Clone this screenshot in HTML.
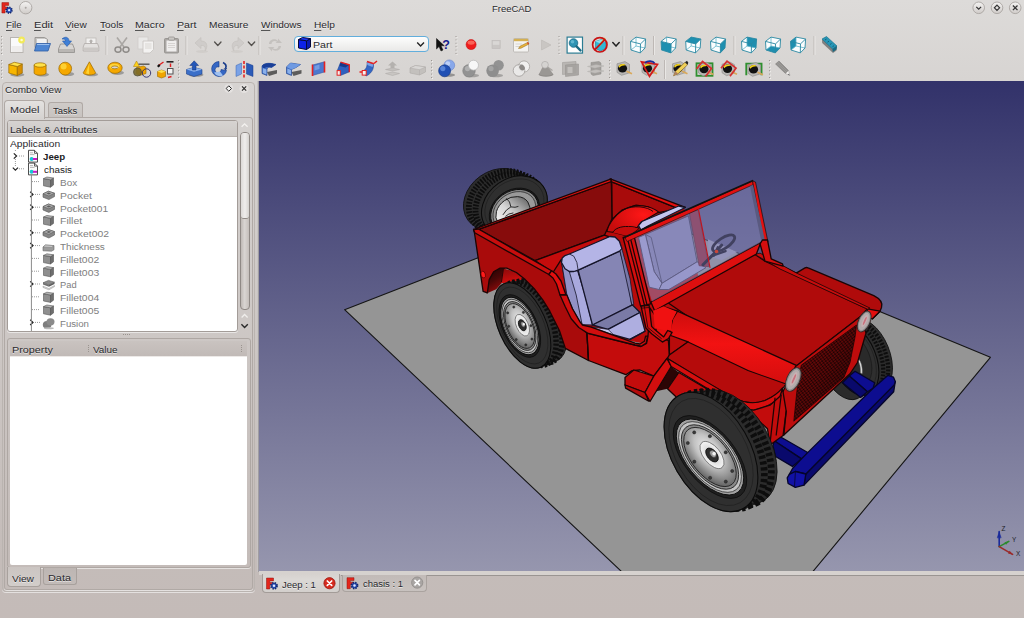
<!DOCTYPE html><html><head><meta charset="utf-8"><title>FreeCAD</title><style>
*{margin:0;padding:0;box-sizing:border-box}
html,body{width:1024px;height:618px;overflow:hidden}
body{font-family:"Liberation Sans",sans-serif;font-size:9.6px;color:#2b2b2b;position:relative;
 background:linear-gradient(#dddbd9 0px,#d7d4d2 80px,#c4bcb9 560px,#c4bbb8 618px);}
.a{position:absolute}
.t{position:absolute;white-space:nowrap;line-height:12px;height:12px;text-shadow:0 1px 0 rgba(255,255,255,.6);color:#2a2a2e}
.m u{text-decoration:none;border-bottom:1px solid #555}
#view{position:absolute;left:259px;top:81px;width:765px;height:490px;background:linear-gradient(#32326a,#9696ae);overflow:hidden}
.fr{position:absolute;border:1px solid #aaa39f;border-radius:3px;box-shadow:inset 0 1px 0 rgba(255,255,255,.0),0 1px 0 rgba(255,255,255,.55)}
.gray{color:#7c7c7c}
.tr{position:absolute;left:0;height:12.8px;width:229px}
</style></head><body>
<div class="t " style="left:491.60px;top:3.04px;font-size:9.7px;transform:scaleX(0.9771);transform-origin:0 0;">FreeCAD</div>
<div class="t m" style="left:5.80px;top:19.04px;font-size:9.7px;transform:scaleX(1.0044);transform-origin:0 0;"><u>F</u>ile</div>
<div class="t m" style="left:33.70px;top:19.04px;font-size:9.7px;transform:scaleX(1.1427);transform-origin:0 0;"><u>E</u>dit</div>
<div class="t m" style="left:65.20px;top:19.04px;font-size:9.7px;transform:scaleX(1.0407);transform-origin:0 0;"><u>V</u>iew</div>
<div class="t m" style="left:99.70px;top:19.04px;font-size:9.7px;transform:scaleX(1.0333);transform-origin:0 0;"><u>T</u>ools</div>
<div class="t m" style="left:135.40px;top:19.04px;font-size:9.7px;transform:scaleX(1.0983);transform-origin:0 0;"><u>M</u>acro</div>
<div class="t m" style="left:177.00px;top:19.04px;font-size:9.7px;transform:scaleX(1.0961);transform-origin:0 0;"><u>P</u>art</div>
<div class="t m" style="left:209.10px;top:19.04px;font-size:9.7px;transform:scaleX(1.0440);transform-origin:0 0;">Measure</div>
<div class="t m" style="left:261.10px;top:19.04px;font-size:9.7px;transform:scaleX(1.0318);transform-origin:0 0;"><u>W</u>indows</div>
<div class="t m" style="left:313.70px;top:19.04px;font-size:9.7px;transform:scaleX(1.0476);transform-origin:0 0;"><u>H</u>elp</div>
<svg class="a" style="left:0;top:0" width="1024" height="81" viewBox="0 0 1024 81"><g transform="translate(1.5,2.2) scale(0.8)"><path d="M0.5,0.5 H9 V4 H4.5 V6 H8 V9 H4.5 V13.5 H0.5Z" fill="#e4261c" stroke="#8c120c" stroke-width=".6"/><circle cx="9.5" cy="10" r="3.6" fill="#2a4fb4" stroke="#14286c" stroke-width="2" stroke-dasharray="1.5 1.3"/><circle cx="9.5" cy="10" r="1.4" fill="#dfe7ff"/></g><defs><linearGradient id="btn" x1="0" y1="0" x2="0" y2="1"><stop offset="0" stop-color="#f4f3f2"/><stop offset="1" stop-color="#cfcbc8"/></linearGradient></defs><circle cx="25.7" cy="7.7" r="6.2" fill="url(#btn)" stroke="#a9a5a2" stroke-width=".9"/><circle cx="25.7" cy="7.7" r="1" fill="#a9a5a2"/><circle cx="978.7" cy="7.8" r="5.8" fill="url(#btn)" stroke="#a9a5a2" stroke-width=".9"/><polyline points="976.3,6.8 978.7,9.2 981.1,6.8" fill="none" stroke="#333" stroke-width="1.2"/><circle cx="997.0" cy="7.8" r="5.8" fill="url(#btn)" stroke="#a9a5a2" stroke-width=".9"/><polygon points="997,5.2 999.6,7.8 997,10.4 994.4,7.8" fill="none" stroke="#333" stroke-width="1.2"/><circle cx="1015.2" cy="7.8" r="5.8" fill="url(#btn)" stroke="#a9a5a2" stroke-width=".9"/><path d="M1012.9,5.5 L1017.5,10.1 M1017.5,5.5 L1012.9,10.1" stroke="#333" stroke-width="1.3"/><line x1="1.5" y1="36.0" x2="1.5" y2="55.0" stroke="#9b9692" stroke-width="1" stroke-dasharray="1 2.4"/>
<line x1="2.5" y1="37.0" x2="2.5" y2="56.0" stroke="#f2f0ee" stroke-width="1" stroke-dasharray="1 2.4"/>
<line x1="1.5" y1="60.0" x2="1.5" y2="79.0" stroke="#9b9692" stroke-width="1" stroke-dasharray="1 2.4"/>
<line x1="2.5" y1="61.0" x2="2.5" y2="80.0" stroke="#f2f0ee" stroke-width="1" stroke-dasharray="1 2.4"/>
<g transform="translate(10.00,37.00)" ><rect x="0.5" y="0.5" width="12.5" height="15" fill="#fafafa" stroke="#b9b5b1" stroke-width="1"/><rect x="1.5" y="9" width="10.5" height="6" fill="#e9e7e5" opacity=".7"/><circle cx="11.6" cy="3" r="3.4" fill="#f2ea5a"/><circle cx="11.6" cy="3" r="1.3" fill="#fffbd0"/></g>
<g transform="translate(33.50,36.50)" ><path d="M1.5,1 H11 L14,3 V11 H1.5Z" fill="#c9c7c5" stroke="#8d8a88" stroke-width=".8"/><path d="M3.5,2.5 H13 V10 H3.5Z" fill="#f2f2f2"/><path d="M3,7 H17 L14.5,14.5 H1 Z" fill="#4e86d2" stroke="#2e5da5" stroke-width=".8"/><path d="M3.6,8 H15.8" stroke="#9cc0ee" stroke-width="1"/></g>
<g transform="translate(58.00,37.00)" ><path d="M2.5,7 H14.5 L16.5,12 V15.5 H0.5 V12Z" fill="#d7d5d3" stroke="#8d8a88" stroke-width=".8"/><rect x="1" y="12" width="15" height="3" fill="#b9b6b3"/><path d="M4,2 C7,-1 11,0 11,4 H13.5 L9,9.5 L4.5,4 H7.5 C7.5,2.4 6,1.6 4,2Z" fill="#3f7fd6" stroke="#2559a8" stroke-width=".6"/></g>
<g transform="translate(83.00,37.00)" ><rect x="3" y="1" width="10" height="7" fill="#f1f0ef" stroke="#bdbab7" stroke-width=".8"/><path d="M8,2.2 L10.4,4.6 H9 V6.5 H7 V4.6 H5.6Z" fill="#b5b2af"/><path d="M1.5,6.5 H14.5 L15.8,10 V14 H0.2 V10Z" fill="#e3e1df" stroke="#aeaaa7" stroke-width=".8"/><rect x="0.6" y="10.5" width="14.8" height="3" fill="#cbc8c5"/></g>
<line x1="106.0" y1="36.0" x2="106.0" y2="55.0" stroke="#bdb8b5" stroke-width="1"/>
<line x1="107.0" y1="36.0" x2="107.0" y2="55.0" stroke="#e9e7e5" stroke-width="1"/>
<g transform="translate(114.00,37.00)" ><path d="M3,0.5 L10,10 M13,0.5 L6,10" stroke="#a9a6a3" stroke-width="1.6" fill="none"/><ellipse cx="4" cy="12.6" rx="3" ry="2.6" fill="none" stroke="#8f8c89" stroke-width="1.5"/><ellipse cx="12" cy="12.6" rx="3" ry="2.6" fill="none" stroke="#8f8c89" stroke-width="1.5"/></g>
<g transform="translate(137.50,36.50)" ><rect x="0.5" y="0.5" width="10" height="12" fill="#e9e8e7" stroke="#cfccca" stroke-width=".8"/><path d="M5.5,4.5 H16 V13 L12.5,16.5 H5.5Z" fill="#f3f2f1" stroke="#c5c2bf" stroke-width=".8"/><path d="M7.5,7.5 H14 M7.5,9.5 H14 M7.5,11.5 H14" stroke="#d2cfcc" stroke-width=".8"/></g>
<g transform="translate(164.00,36.50)" ><rect x="0.5" y="2" width="14" height="14.5" rx="1" fill="#aaa7a4" stroke="#8e8b88" stroke-width=".8"/><rect x="2.5" y="4" width="10" height="11" fill="#efeeed"/><rect x="4.5" y="0.5" width="6" height="3.2" rx="1" fill="#c9c6c3" stroke="#8e8b88" stroke-width=".7"/><path d="M4,7 H11 M4,9 H11 M4,11 H11" stroke="#cfccc9" stroke-width=".8"/></g>
<line x1="186.0" y1="36.0" x2="186.0" y2="55.0" stroke="#bdb8b5" stroke-width="1"/>
<line x1="187.0" y1="36.0" x2="187.0" y2="55.0" stroke="#e9e7e5" stroke-width="1"/>
<g transform="translate(194.00,37.00)" ><path d="M1,6 L7,0.5 V4 C13,4 14.5,9 11,14 C12,10 10.5,8.2 7,8.4 V11.5Z" fill="#cfccca" stroke="#c2bfbc" stroke-width=".6"/><ellipse cx="8" cy="14.5" rx="6" ry="1.5" fill="#c9c6c3" opacity=".6"/></g>
<polyline points="214.6,42.0 217.8,45.5 221.0,42.0" fill="none" stroke="#55524f" stroke-width="1.3" stroke-linecap="round" stroke-linejoin="round"/>
<g transform="translate(229.00,37.00)" ><path d="M15,6 L9,0.5 V4 C3,4 1.5,9 5,14 C4,10 5.5,8.2 9,8.4 V11.5Z" fill="#cfccca" stroke="#c2bfbc" stroke-width=".6"/><ellipse cx="8" cy="14.5" rx="6" ry="1.5" fill="#c9c6c3" opacity=".6"/></g>
<polyline points="248.3,42.0 251.5,45.5 254.7,42.0" fill="none" stroke="#55524f" stroke-width="1.3" stroke-linecap="round" stroke-linejoin="round"/>
<line x1="259.0" y1="36.0" x2="259.0" y2="55.0" stroke="#bdb8b5" stroke-width="1"/>
<line x1="260.0" y1="36.0" x2="260.0" y2="55.0" stroke="#e9e7e5" stroke-width="1"/>
<g transform="translate(267.00,37.00)" ><path d="M2,7 C2,2 9,1 11,4 V1.5 L15,6 H8.5 L10,4.8 C8,3 4.5,4 4.5,7Z" fill="#c4c1be"/><path d="M14,9 C14,14 7,15 5,12 V14.5 L1,10 H7.5 L6,11.2 C8,13 11.5,12 11.5,9Z" fill="#c4c1be"/></g>
<g transform="translate(436.00,38.00)" ><path d="M0.5,0.5 V11 L3,8.6 L5,13 L7,12 L5,7.8 H8.3Z" fill="#111" stroke="#111" stroke-width=".5" stroke-linejoin="round"/></g>
<text x="442.3" y="48.6" font-family="Liberation Sans,sans-serif" font-weight="bold" font-size="12.5" fill="#141c8c">?</text>
<line x1="456.0" y1="36.0" x2="456.0" y2="55.0" stroke="#9b9692" stroke-width="1" stroke-dasharray="1 2.4"/>
<line x1="457.0" y1="37.0" x2="457.0" y2="56.0" stroke="#f2f0ee" stroke-width="1" stroke-dasharray="1 2.4"/>
<circle cx="471.1" cy="44.6" r="5" fill="#ee1c1c"/><ellipse cx="471.1" cy="42.6" rx="3.6" ry="2.2" fill="#ff7b6b" opacity=".75"/><circle cx="471.1" cy="44.6" r="5" fill="none" stroke="#c41010" stroke-width=".6"/>
<rect x="492" y="40.5" width="8.2" height="8" fill="#c9c6c4" stroke="#bdbab8" stroke-width=".6"/><rect x="492.8" y="41.2" width="6.6" height="3.6" fill="#d9d7d5"/>
<g transform="translate(513.00,37.00)" ><rect x="0.5" y="1.5" width="15" height="13.5" rx="1" fill="#f4f3f1" stroke="#b5b1ad" stroke-width=".8"/><rect x="0.9" y="1.8" width="14.2" height="2.4" fill="#d4b052"/><path d="M2.5,7 H9 M2.5,9.5 H7" stroke="#cfcbc7" stroke-width=".8"/><path d="M5.5,11.5 L7,9.2 L15,5.2 L16,7 L8,11.2Z" fill="#e8b23a" stroke="#8f6a1c" stroke-width=".5"/><path d="M14,5.7 L15,5.2 L16,7 L15,7.5Z" fill="#d83a2a"/></g>
<g transform="translate(541.00,39.50)" ><path d="M0.5,0.5 L10,5.5 L0.5,10.5Z" fill="#c9c6c3" stroke="#bcb9b6" stroke-width=".6"/></g>
<line x1="559.0" y1="36.0" x2="559.0" y2="55.0" stroke="#9b9692" stroke-width="1" stroke-dasharray="1 2.4"/>
<line x1="560.0" y1="37.0" x2="560.0" y2="56.0" stroke="#f2f0ee" stroke-width="1" stroke-dasharray="1 2.4"/>
<g transform="translate(566.50,36.50)" ><rect x="0.6" y="0.6" width="15.4" height="16" fill="#fdfdfd" stroke="#2b7d93" stroke-width="1.2"/><circle cx="7" cy="6.5" r="4.3" fill="#2e93b3" stroke="#1b6a84" stroke-width=".8"/><circle cx="6" cy="5.3" r="1.8" fill="#6ec0d8" opacity=".8"/><path d="M10,9.8 L14,14" stroke="#1b6a84" stroke-width="2.4" stroke-linecap="round"/></g>
<g transform="translate(591.50,36.50)" ><polygon points="4,5 10,3 14,5 14,12 9,14.5 4,12" fill="#31b8d6" stroke="#1a7f98" stroke-width=".6"/><polygon points="4,5 10,3 14,5 9,7" fill="#8be0f0"/><path d="M8,9 L13.5,1.5" stroke="#e9c23a" stroke-width="1.6"/><circle cx="8.3" cy="8.3" r="7.2" fill="none" stroke="#c81414" stroke-width="1.7"/><path d="M3.2,13.4 L13.4,3.2" stroke="#c81414" stroke-width="1.7"/></g>
<polyline points="612.8,42.6 616.0,46.1 619.2,42.6" fill="none" stroke="#222" stroke-width="1.5" stroke-linecap="round" stroke-linejoin="round"/>
<line x1="623.0" y1="36.0" x2="623.0" y2="55.0" stroke="#bdb8b5" stroke-width="1"/>
<line x1="624.0" y1="36.0" x2="624.0" y2="55.0" stroke="#e9e7e5" stroke-width="1"/>
<line x1="653.5" y1="36.0" x2="653.5" y2="55.0" stroke="#bdb8b5" stroke-width="1"/>
<line x1="654.5" y1="36.0" x2="654.5" y2="55.0" stroke="#e9e7e5" stroke-width="1"/>
<g transform="translate(630.00,36.40)" ><polygon points="0.5,5.0 6.0,0.7 15.6,2.6 15.0,11.6 10.3,16.5 1.0,13.6" fill="#fbfdfe" stroke="none"/><g stroke="#5fb3c8" stroke-width="0.8" fill="none"><polyline points="6.0,0.7 6.0,9.6 1.0,13.6"/><polyline points="6.0,9.6 15.0,11.6"/><polyline points="6.0,9.6 6.0,9.6"/></g><g stroke="#2a88a2" stroke-width="0.9" fill="none" stroke-linejoin="round"><polygon points="0.5,5.0 6.0,0.7 15.6,2.6 15.0,11.6 10.3,16.5 1.0,13.6"/><polyline points="0.5,5.0 10.5,7.5 10.3,16.5"/><polyline points="10.5,7.5 15.6,2.6"/><polyline points="10.5,7.5 10.5,7.5"/></g></g>
<g transform="translate(660.60,36.40)" ><polygon points="0.5,5.0 6.0,0.7 15.6,2.6 15.0,11.6 10.3,16.5 1.0,13.6" fill="#fbfdfe" stroke="none"/><g stroke="#5fb3c8" stroke-width="0.8" fill="none"><polyline points="6.0,0.7 6.0,9.6 1.0,13.6"/><polyline points="6.0,9.6 15.0,11.6"/><polyline points="6.0,9.6 6.0,9.6"/></g><polygon points="0.5,5.0 10.5,7.5 10.3,16.5 1.0,13.6" fill="#1e8fb0"/><g stroke="#2a88a2" stroke-width="0.9" fill="none" stroke-linejoin="round"><polygon points="0.5,5.0 6.0,0.7 15.6,2.6 15.0,11.6 10.3,16.5 1.0,13.6"/><polyline points="0.5,5.0 10.5,7.5 10.3,16.5"/><polyline points="10.5,7.5 15.6,2.6"/><polyline points="10.5,7.5 10.5,7.5"/></g></g>
<g transform="translate(685.20,36.40)" ><polygon points="0.5,5.0 6.0,0.7 15.6,2.6 15.0,11.6 10.3,16.5 1.0,13.6" fill="#fbfdfe" stroke="none"/><g stroke="#5fb3c8" stroke-width="0.8" fill="none"><polyline points="6.0,0.7 6.0,9.6 1.0,13.6"/><polyline points="6.0,9.6 15.0,11.6"/><polyline points="6.0,9.6 6.0,9.6"/></g><polygon points="0.5,5.0 6.0,0.7 15.6,2.6 10.5,7.5" fill="#1e8fb0"/><g stroke="#2a88a2" stroke-width="0.9" fill="none" stroke-linejoin="round"><polygon points="0.5,5.0 6.0,0.7 15.6,2.6 15.0,11.6 10.3,16.5 1.0,13.6"/><polyline points="0.5,5.0 10.5,7.5 10.3,16.5"/><polyline points="10.5,7.5 15.6,2.6"/><polyline points="10.5,7.5 10.5,7.5"/></g></g>
<g transform="translate(710.00,36.40)" ><polygon points="0.5,5.0 6.0,0.7 15.6,2.6 15.0,11.6 10.3,16.5 1.0,13.6" fill="#fbfdfe" stroke="none"/><g stroke="#5fb3c8" stroke-width="0.8" fill="none"><polyline points="6.0,0.7 6.0,9.6 1.0,13.6"/><polyline points="6.0,9.6 15.0,11.6"/><polyline points="6.0,9.6 6.0,9.6"/></g><polygon points="10.5,7.5 15.6,2.6 15.0,11.6 10.3,16.5" fill="#1e8fb0"/><g stroke="#2a88a2" stroke-width="0.9" fill="none" stroke-linejoin="round"><polygon points="0.5,5.0 6.0,0.7 15.6,2.6 15.0,11.6 10.3,16.5 1.0,13.6"/><polyline points="0.5,5.0 10.5,7.5 10.3,16.5"/><polyline points="10.5,7.5 15.6,2.6"/><polyline points="10.5,7.5 10.5,7.5"/></g></g>
<line x1="734.0" y1="36.0" x2="734.0" y2="55.0" stroke="#bdb8b5" stroke-width="1"/>
<line x1="735.0" y1="36.0" x2="735.0" y2="55.0" stroke="#e9e7e5" stroke-width="1"/>
<g transform="translate(741.00,36.40)" ><polygon points="0.5,5.0 6.0,0.7 15.6,2.6 15.0,11.6 10.3,16.5 1.0,13.6" fill="#fbfdfe" stroke="none"/><polygon points="6.0,0.7 15.6,2.6 15.0,11.6 6.0,9.6" fill="#1e8fb0"/><g stroke="#5fb3c8" stroke-width="0.8" fill="none"><polyline points="6.0,0.7 6.0,9.6 1.0,13.6"/><polyline points="6.0,9.6 15.0,11.6"/><polyline points="6.0,9.6 6.0,9.6"/></g><g stroke="#2a88a2" stroke-width="0.9" fill="none" stroke-linejoin="round"><polygon points="0.5,5.0 6.0,0.7 15.6,2.6 15.0,11.6 10.3,16.5 1.0,13.6"/><polyline points="0.5,5.0 10.5,7.5 10.3,16.5"/><polyline points="10.5,7.5 15.6,2.6"/><polyline points="10.5,7.5 10.5,7.5"/></g></g>
<g transform="translate(765.00,36.40)" ><polygon points="0.5,5.0 6.0,0.7 15.6,2.6 15.0,11.6 10.3,16.5 1.0,13.6" fill="#fbfdfe" stroke="none"/><polygon points="1.0,13.6 10.3,16.5 15.0,11.6 6.0,9.6" fill="#1e8fb0"/><g stroke="#5fb3c8" stroke-width="0.8" fill="none"><polyline points="6.0,0.7 6.0,9.6 1.0,13.6"/><polyline points="6.0,9.6 15.0,11.6"/><polyline points="6.0,9.6 6.0,9.6"/></g><g stroke="#2a88a2" stroke-width="0.9" fill="none" stroke-linejoin="round"><polygon points="0.5,5.0 6.0,0.7 15.6,2.6 15.0,11.6 10.3,16.5 1.0,13.6"/><polyline points="0.5,5.0 10.5,7.5 10.3,16.5"/><polyline points="10.5,7.5 15.6,2.6"/><polyline points="10.5,7.5 10.5,7.5"/></g></g>
<g transform="translate(790.00,36.40)" ><polygon points="0.5,5.0 6.0,0.7 15.6,2.6 15.0,11.6 10.3,16.5 1.0,13.6" fill="#fbfdfe" stroke="none"/><polygon points="0.5,5.0 6.0,0.7 6.0,9.6 1.0,13.6" fill="#1e8fb0"/><g stroke="#5fb3c8" stroke-width="0.8" fill="none"><polyline points="6.0,0.7 6.0,9.6 1.0,13.6"/><polyline points="6.0,9.6 15.0,11.6"/><polyline points="6.0,9.6 6.0,9.6"/></g><g stroke="#2a88a2" stroke-width="0.9" fill="none" stroke-linejoin="round"><polygon points="0.5,5.0 6.0,0.7 15.6,2.6 15.0,11.6 10.3,16.5 1.0,13.6"/><polyline points="0.5,5.0 10.5,7.5 10.3,16.5"/><polyline points="10.5,7.5 15.6,2.6"/><polyline points="10.5,7.5 10.5,7.5"/></g></g>
<line x1="814.0" y1="36.0" x2="814.0" y2="55.0" stroke="#bdb8b5" stroke-width="1"/>
<line x1="815.0" y1="36.0" x2="815.0" y2="55.0" stroke="#e9e7e5" stroke-width="1"/>
<g transform="translate(821.00,36.50)" ><polygon points="1,3.5 5,0.5 16,10.5 15.5,14 12,16.5 1.2,6.5" fill="#3a3a3a" opacity=".55"/><polygon points="1,2.5 5.5,0 16,9.5 11.5,12.5" fill="#2796b6" stroke="#176e88" stroke-width=".6"/><polygon points="11.5,12.5 16,9.5 15.5,13 11.8,15.5" fill="#156a84"/><path d="M4,3.5 L5.5,2.5 M6.5,5.7 L8,4.7 M9,8 L10.5,7 M11.5,10.2 L13,9.2" stroke="#0b3e50" stroke-width=".6"/></g>
<g transform="translate(8.30,61.50)" ><ellipse cx="9" cy="13.2" rx="7" ry="2" fill="#6b6b6b" opacity=".55"/><polygon points="0.5,3 9,5 9,14 0.5,11.5" fill="#f7b500" stroke="#9a6a00" stroke-width=".7"/><polygon points="9,5 14,2.5 14,11.5 9,14" fill="#d98f00" stroke="#9a6a00" stroke-width=".7"/><polygon points="0.5,3 6,0.8 14,2.5 9,5" fill="#ffe14a" stroke="#9a6a00" stroke-width=".7"/></g>
<g transform="translate(33.60,62.00)" ><ellipse cx="9" cy="12.6" rx="6.5" ry="2" fill="#6b6b6b" opacity=".55"/><path d="M0.5,3 V11 A6,2.2 0 0 0 12.5,11 V3 Z" fill="#f5a800" stroke="#9a6a00" stroke-width=".7"/><ellipse cx="6.5" cy="3" rx="6" ry="2.2" fill="#ffe14a" stroke="#9a6a00" stroke-width=".7"/></g>
<g transform="translate(58.20,61.60)" ><ellipse cx="10" cy="12.4" rx="6" ry="2" fill="#6b6b6b" opacity=".55"/><circle cx="7" cy="7" r="6.4" fill="#f5a800" stroke="#9a6a00" stroke-width=".7"/><circle cx="5.4" cy="5" r="3" fill="#ffd940" opacity=".8"/></g>
<g transform="translate(83.00,61.80)" ><ellipse cx="9" cy="12.6" rx="6" ry="1.8" fill="#6b6b6b" opacity=".55"/><path d="M6.4,0 L12.6,11 A6.2,2.2 0 0 1 0.2,11 Z" fill="#f5a800" stroke="#9a6a00" stroke-width=".7"/><path d="M6.4,0.8 L3,11.5 L6,12.5 Z" fill="#ffdc40" opacity=".8"/></g>
<g transform="translate(107.50,61.80)" ><ellipse cx="10" cy="11" rx="6.5" ry="2.2" fill="#6b6b6b" opacity=".55"/><ellipse cx="7.5" cy="6" rx="7.2" ry="5.6" fill="#f5a800" stroke="#9a6a00" stroke-width=".7"/><ellipse cx="7" cy="4.6" rx="5" ry="2.6" fill="#ffe14a" opacity=".8"/><ellipse cx="7.3" cy="5.6" rx="3.4" ry="1.4" fill="#d9d5d0" stroke="#9a6a00" stroke-width=".7"/></g>
<g transform="translate(132.50,60.50)" ><polygon points="4,0.5 7,6 1,6" fill="#ffd21a" stroke="#a97a00" stroke-width=".5"/><rect x="6" y="3" width="11" height="1.4" fill="#555"/><polygon points="4,7 11,5.5 13.5,7 13.5,13 7,15 4,13" fill="#f0a400" stroke="#9a6a00" stroke-width=".6"/><circle cx="5" cy="11.5" r="4" fill="#7a6a2a" stroke="#4a4a3a" stroke-width=".8" opacity=".9"/><circle cx="14" cy="12.5" r="4.2" fill="none" stroke="#2a2a6a" stroke-width=".9"/></g>
<g transform="translate(156.50,60.50)" ><rect x="10" y="0.5" width="7" height="1.6" fill="#222"/><rect x="11" y="8" width="5.5" height="5.5" fill="#f4f4f4" stroke="#555" stroke-width="1"/><polygon points="1,11 5,9.5 9,11 9,16 5,17.5 1,16" fill="#f0a400" stroke="#9a6a00" stroke-width=".6"/><polygon points="1,11 5,9.5 9,11 5,12.5" fill="#ffe14a"/><path d="M2,5 L7,1.5 M14,3 V6.5 M15,16 L11.5,17" stroke="#e02020" stroke-width="1.4"/><path d="M0.5,5.5 L2.5,3.5 L4,5.2 L2,7Z" fill="#111"/></g>
<line x1="178.5" y1="60.0" x2="178.5" y2="79.0" stroke="#9b9692" stroke-width="1" stroke-dasharray="1 2.4"/>
<line x1="179.5" y1="61.0" x2="179.5" y2="80.0" stroke="#f2f0ee" stroke-width="1" stroke-dasharray="1 2.4"/>
<g transform="translate(186.00,60.50)" ><ellipse cx="10" cy="14.3" rx="7.5" ry="2" fill="#555" opacity=".5"/><polygon points="0.5,9 8,7 16,9 16,13.5 8,16 0.5,13.5" fill="#3b6fc8" stroke="#1d3f8a" stroke-width=".6"/><polygon points="0.5,9 8,7 16,9 8,11.2" fill="#8eb4ee"/><path d="M8.2,0.3 L12.6,5 H10 V9.5 H6.4 V5 H3.8Z" fill="#2457b8" stroke="#12307a" stroke-width=".5"/></g>
<g transform="translate(211.00,60.50)" ><path d="M8,1 A7.5,7.5 0 1 0 15.5,10 L10,9 A3,3 0 1 1 8,6.5Z" fill="#3567c4" stroke="#163a8a" stroke-width=".6"/><path d="M3,12 A7,7 0 0 0 12,15 L9,11Z" fill="#9fc0f0"/><path d="M12,2 C15,3.5 15.5,6 14.5,8" fill="none" stroke="#163a8a" stroke-width="1.6"/><path d="M12.6,8 L14.6,10 L16.2,7.4Z" fill="#163a8a"/></g>
<g transform="translate(235.50,60.50)" ><polygon points="0.5,5 6,2.5 6,13.5 0.5,16" fill="#7aa2e6" stroke="#3a62b0" stroke-width=".5"/><polygon points="17.5,5 11,2.5 11,13.5 17.5,16" fill="#2b5bb8" stroke="#163a8a" stroke-width=".5"/><path d="M8.5,0.5 V17.5" stroke="#e62020" stroke-width="1.6" stroke-dasharray="3 1.5"/></g>
<g transform="translate(261.00,61.00)" ><polygon points="6,11 16,9 16,12.5 8,15" fill="#333" opacity=".75"/><path d="M1,5 C3,2 8,1.5 15,3.5 L10.5,6.5 C8,6 6.5,6.5 6,8 L6,14.5 L1,12.5Z" fill="#3d6dc6" stroke="#183c8c" stroke-width=".6"/><path d="M1,5 C3,2 8,1.5 15,3.5 L10.5,6.5 C7,5.5 4,6 3,8Z" fill="#1a3f98"/><path d="M1.8,7 L5.5,8.6 V13.5 L1.8,12Z" fill="#9ec0f2" opacity=".8"/></g>
<g transform="translate(285.50,61.00)" ><polygon points="6,11 16,9 16,12.5 8,15" fill="#333" opacity=".75"/><path d="M1,6 L5,2 L15,3.5 L10.5,6.5 L6,8.5 L6,14.5 L1,12.5Z" fill="#3d6dc6" stroke="#183c8c" stroke-width=".6"/><path d="M1,6 L5,2 L15,3.5 L10.5,6.5 L6,8.5Z" fill="#6f9ae2"/><path d="M1.8,7.4 L5.5,9 V13.5 L1.8,12Z" fill="#9ec0f2" opacity=".8"/></g>
<g transform="translate(311.50,61.00)" ><polygon points="1,4 13,0.8 13,11 1,14.5" fill="#4b78cf" stroke="#2a4fa0" stroke-width=".5"/><polygon points="3,5 8,3.6 8,8 3,9.4" fill="#8fb2ee" opacity=".6"/><path d="M1,3.5 V15 M13,0.5 V11.5" stroke="#e62020" stroke-width="1.6"/></g>
<g transform="translate(336.50,61.00)" ><polygon points="4,1.5 12.5,4 12.5,11 4,14.5 1,12 1,9" fill="#2f60bf" stroke="#173a8c" stroke-width=".5"/><polygon points="4,1.5 12.5,4 9,6.5 3,5" fill="#173a8c"/><path d="M4,1.2 L12.8,3.8 V11.2" stroke="#e62020" stroke-width="1.3" fill="none"/><rect x="0.6" y="9.6" width="3.2" height="4.6" fill="#f3f3f3" stroke="#e62020" stroke-width="1"/></g>
<g transform="translate(359.00,60.50)" ><path d="M8,1.5 L14.5,3.5 C15,9 12,13.5 7,15.5 L3.5,11 C7,9 8.5,6 8,1.5Z" fill="#3567c4" stroke="#173a8c" stroke-width=".5"/><path d="M8,1.5 L14.5,3.5 L13.5,6.5 L8.3,4.5Z" fill="#7aa2e6"/><path d="M8,1 L14.8,3.2 M15,3 L18,0.5 M0.5,11.5 H4.5" stroke="#e62020" stroke-width="1.5"/><rect x="3.2" y="10" width="4" height="4.6" fill="#f3f3f3" stroke="#e62020" stroke-width="1"/></g>
<g transform="translate(385.00,61.00)" ><path d="M7.5,0.5 L12,4.5 H9.5 V7 H5.5 V4.5 H3Z" fill="#b4b1ae"/><polygon points="0.5,8.5 7.5,7 14.5,8.5 7.5,10" fill="#c2bfbc" stroke="#aaa7a4" stroke-width=".5"/><polygon points="0.5,12.5 7.5,11 14.5,12.5 7.5,14.5" fill="#c8c5c2" stroke="#aaa7a4" stroke-width=".5"/></g>
<g transform="translate(409.50,64.50)" ><polygon points="0.5,3.5 6,1 16,2.5 16,7.5 10,10.5 0.5,8.5" fill="#c3c0bd" stroke="#aeaba8" stroke-width=".6"/><polygon points="0.5,3.5 6,1 16,2.5 10,5.2" fill="#d8d6d4" stroke="#aeaba8" stroke-width=".5"/><path d="M10,5.2 V10.5" stroke="#aeaba8" stroke-width=".5"/></g>
<line x1="431.5" y1="60.0" x2="431.5" y2="79.0" stroke="#9b9692" stroke-width="1" stroke-dasharray="1 2.4"/>
<line x1="432.5" y1="61.0" x2="432.5" y2="80.0" stroke="#f2f0ee" stroke-width="1" stroke-dasharray="1 2.4"/>
<ellipse cx="448" cy="75" rx="7" ry="1.8" fill="#444" opacity=".45"/><circle cx="449.3" cy="65.3" r="5.4" fill="#88a8ea" stroke="#5a7ac8" stroke-width=".5"/><circle cx="447.8" cy="63.6" r="2.4" fill="#c8d8fa" opacity=".8"/><circle cx="444.6" cy="70.8" r="6" fill="#1f4fb4" stroke="#123480" stroke-width=".6"/><circle cx="442.8" cy="68.6" r="2.6" fill="#6a94e4" opacity=".75"/>
<ellipse cx="472" cy="75.5" rx="7" ry="1.8" fill="#444" opacity=".35"/><circle cx="469" cy="70.8" r="6.3" fill="#929292" stroke="#7a7a7a" stroke-width=".5"/><circle cx="467.5" cy="68.6" r="2.6" fill="#bdbdbd" opacity=".7"/><circle cx="473.5" cy="65.2" r="5" fill="#f7f7f7" stroke="#b5b5b5" stroke-width=".7"/>
<ellipse cx="496" cy="75.5" rx="7" ry="1.8" fill="#444" opacity=".35"/><circle cx="498.6" cy="65.3" r="5.2" fill="#929292"/><circle cx="492.6" cy="70.8" r="6.3" fill="#8e8e8e"/><circle cx="491" cy="68.6" r="2.6" fill="#b4b4b4" opacity=".6"/>
<circle cx="524" cy="66.5" r="5.6" fill="#f1f0ef" stroke="#a6a3a0" stroke-width=".8"/><circle cx="519" cy="70.5" r="5.8" fill="#efeeed" stroke="#9f9c99" stroke-width=".8" fill-opacity=".8"/><ellipse cx="522" cy="67.6" rx="2.6" ry="3" fill="#8d8a87" transform="rotate(-40 522 67.6)"/>
<g transform="translate(538.00,61.00)" ><ellipse cx="8" cy="13.5" rx="7.5" ry="2.2" fill="#8e8b88"/><path d="M5.5,4 L1,13 C4,15 12,15 15,13 L9,4Z" fill="#9a9794"/><circle cx="7" cy="3.8" r="3.4" fill="#d5d3d1" stroke="#a8a5a2" stroke-width=".6"/><path d="M9.5,6 L14.5,9.5" stroke="#a8a5a2" stroke-width="1.2"/></g>
<g transform="translate(562.00,61.00)" ><polygon points="0.5,1.5 14,0.5 14,12 0.5,13.5" fill="#b9b6b3" stroke="#a19e9b" stroke-width=".6"/><polygon points="3.5,4 16.5,3 16.5,14 3.5,15.5" fill="#a5a29f" stroke="#95928f" stroke-width=".6" opacity=".9"/><rect x="5.5" y="6" width="5" height="6" fill="#c9c6c3" opacity=".8"/></g>
<g transform="translate(587.00,61.00)" ><polygon points="4,1.5 12,0.5 14,2 14,13 6,14.5 4,13" fill="#a29f9c" stroke="#8f8c89" stroke-width=".5"/><polygon points="0.5,5.5 9,3.5 17,5 8,7.2" fill="#c6c3c0" stroke="#a9a6a3" stroke-width=".4" opacity=".9"/><polygon points="0.5,10.5 9,8.5 17,10 8,12.2" fill="#c6c3c0" stroke="#a9a6a3" stroke-width=".4" opacity=".9"/></g>
<line x1="609.5" y1="60.0" x2="609.5" y2="79.0" stroke="#9b9692" stroke-width="1" stroke-dasharray="1 2.4"/>
<line x1="610.5" y1="61.0" x2="610.5" y2="80.0" stroke="#f2f0ee" stroke-width="1" stroke-dasharray="1 2.4"/>
<g transform="translate(616.00,60.80)" ><polygon points="1,3 9,0.8 13.5,3.5 13.5,12 5.5,14.5 1,11.5" fill="#b9b7b5" stroke="#8a8886" stroke-width=".6"/><ellipse cx="6.5" cy="7.6" rx="4.6" ry="4.2" fill="#111"/><path d="M2.6,5.6 C4,2.8 8,2.6 10,4.6 C8,4.4 5,5 3.4,7Z" fill="#f2d21a"/><path d="M10.5,10.5 L16,13" stroke="#d9a85a" stroke-width="1.6"/></g>
<g transform="translate(641.00,60.80)" ><polygon points="1,3 9,0.8 13.5,3.5 13.5,12 5.5,14.5 1,11.5" fill="#b9b7b5" stroke="#8a8886" stroke-width=".6"/><ellipse cx="6.5" cy="7.6" rx="4.6" ry="4.2" fill="#111"/><path d="M2.6,5.6 C4,2.8 8,2.6 10,4.6 C8,4.4 5,5 3.4,7Z" fill="#f2d21a"/><path d="M10.5,10.5 L16,13" stroke="#d9a85a" stroke-width="1.6"/><path d="M0.5,1 L8.5,15.5 L16.5,3.5Z" fill="none" stroke="#d41818" stroke-width="1.7"/><path d="M4,2 C7,-0.5 12,0 13.5,2.5" stroke="#1c2c9c" stroke-width="1.8" fill="none"/></g>
<line x1="664.5" y1="60.0" x2="664.5" y2="79.0" stroke="#bdb8b5" stroke-width="1"/>
<line x1="665.5" y1="60.0" x2="665.5" y2="79.0" stroke="#e9e7e5" stroke-width="1"/>
<g transform="translate(671.50,60.80)" ><polygon points="1,3 9,0.8 13.5,3.5 13.5,12 5.5,14.5 1,11.5" fill="#b9b7b5" stroke="#8a8886" stroke-width=".6"/><ellipse cx="6.5" cy="7.6" rx="4.6" ry="4.2" fill="#111"/><path d="M2.6,5.6 C4,2.8 8,2.6 10,4.6 C8,4.4 5,5 3.4,7Z" fill="#f2d21a"/><path d="M10.5,10.5 L16,13" stroke="#d9a85a" stroke-width="1.6"/><path d="M2,15 L4,10.5 L13.5,1.5 L16,4 L6.5,13Z" fill="#f0d058" stroke="#7a5a1a" stroke-width=".6"/><path d="M13.5,1.5 L15.5,0 L16.8,2 L16,4Z" fill="#222"/><path d="M2,15 L4,10.5 L6.5,13Z" fill="#b08060"/></g>
<g transform="translate(696.00,60.80)" ><rect x="0.5" y="2.5" width="16" height="12.5" fill="none" stroke="#2f8f2f" stroke-width="1.8"/></g>
<g transform="translate(697.50,61.50)" ><polygon points="1,3 9,0.8 13.5,3.5 13.5,12 5.5,14.5 1,11.5" fill="#b9b7b5" stroke="#8a8886" stroke-width=".6"/><ellipse cx="6.5" cy="7.6" rx="4.6" ry="4.2" fill="#111"/><path d="M2.6,5.6 C4,2.8 8,2.6 10,4.6 C8,4.4 5,5 3.4,7Z" fill="#f2d21a"/><path d="M10.5,10.5 L16,13" stroke="#d9a85a" stroke-width="1.6"/><path d="M-1,7.5 L5,0 L14,7 L8,15" fill="none" stroke="#d43030" stroke-width="1.7"/></g>
<g transform="translate(721.00,61.20)" ><polygon points="1,3 9,0.8 13.5,3.5 13.5,12 5.5,14.5 1,11.5" fill="#b9b7b5" stroke="#8a8886" stroke-width=".6"/><ellipse cx="6.5" cy="7.6" rx="4.6" ry="4.2" fill="#111"/><path d="M2.6,5.6 C4,2.8 8,2.6 10,4.6 C8,4.4 5,5 3.4,7Z" fill="#f2d21a"/><path d="M10.5,10.5 L16,13" stroke="#d9a85a" stroke-width="1.6"/><path d="M0,7 L6,0 L15,7 L9,15" fill="none" stroke="#d43030" stroke-width="1.7"/></g>
<g transform="translate(745.50,60.80)" ><path d="M0.8,14.5 V2.8 H16 V14.5" fill="none" stroke="#2f8f2f" stroke-width="1.9"/></g>
<g transform="translate(747.00,61.80)" ><polygon points="1,3 9,0.8 13.5,3.5 13.5,12 5.5,14.5 1,11.5" fill="#b9b7b5" stroke="#8a8886" stroke-width=".6"/><ellipse cx="6.5" cy="7.6" rx="4.6" ry="4.2" fill="#111"/><path d="M2.6,5.6 C4,2.8 8,2.6 10,4.6 C8,4.4 5,5 3.4,7Z" fill="#f2d21a"/><path d="M10.5,10.5 L16,13" stroke="#d9a85a" stroke-width="1.6"/></g>
<line x1="769.5" y1="60.0" x2="769.5" y2="79.0" stroke="#9b9692" stroke-width="1" stroke-dasharray="1 2.4"/>
<line x1="770.5" y1="61.0" x2="770.5" y2="80.0" stroke="#f2f0ee" stroke-width="1" stroke-dasharray="1 2.4"/>
<g transform="translate(775.00,60.50)" ><polygon points="0.5,3.5 4,0.5 13.5,10 10.5,13" fill="#8f8d8b" stroke="#7a7876" stroke-width=".5"/><path d="M2,3 L11.5,12 M3,1.8 L12.5,11" stroke="#a9a7a5" stroke-width=".6"/><polygon points="10.5,13 13.5,10 15,15" fill="#f1efed" stroke="#9a9896" stroke-width=".5"/><polygon points="13.6,13.2 15,15 13,14.2" fill="#555"/></g></svg>
<div class="a" style="left:293.5px;top:35.5px;width:135px;height:16.5px;border:1.6px solid #62aedc;border-radius:4px;background:linear-gradient(#fdfdfd,#e9e8e7)"></div>
<svg class="a" style="left:297px;top:36px" width="16" height="15" viewBox="0 0 16 15"><polygon points="1.5,3.5 9.5,4.8 9.5,13.5 1.5,12" fill="#0d22e8" stroke="#050a3a" stroke-width="1"/><polygon points="9.5,4.8 13.5,2.6 13.5,11 9.5,13.5" fill="#0a1ab4" stroke="#050a3a" stroke-width="1"/><polygon points="1.5,3.5 5.5,1.5 13.5,2.6 9.5,4.8" fill="#1a35f5" stroke="#050a3a" stroke-width="1"/></svg>
<div class="t " style="left:312.95px;top:38.64px;font-size:9.7px;transform:scaleX(1.0989);transform-origin:0 0;">Part</div>
<svg class="a" style="left:415px;top:40px" width="12" height="9" viewBox="0 0 12 9"><polyline points="2.2,2.5 5.6,5.9 9,2.5" fill="none" stroke="#222" stroke-width="1.4"/></svg>
<div class="fr" style="left:1.5px;top:82px;width:253px;height:510px;border-color:#bab4b0;border-radius:4px"></div>
<div class="t " style="left:5.10px;top:83.64px;font-size:9.7px;transform:scaleX(1.0289);transform-origin:0 0;">Combo View</div>
<svg class="a" style="left:222px;top:82px" width="30" height="13" viewBox="0 0 30 13"><circle cx="6.8" cy="6.5" r="4.6" fill="#e9e7e5" opacity=".7"/><polygon points="6.8,3.8 9.5,6.5 6.8,9.2 4.1,6.5" fill="#f6f5f4" stroke="#2a2a2a" stroke-width="1"/><circle cx="22.1" cy="6.5" r="4.6" fill="#e9e7e5" opacity=".7"/><path d="M20,4.4 L24.2,8.6 M24.2,4.4 L20,8.6" stroke="#2a2a2a" stroke-width="1.1"/></svg>
<div class="fr" style="left:4px;top:117px;width:249px;height:473px;border-color:#b0a9a5"></div>
<div class="a" style="left:4px;top:99.5px;width:41px;height:19px;border:1px solid #b0a9a5;border-bottom:none;border-radius:4px 4px 0 0;background:linear-gradient(#e4e2e0,#d5d2d0)"></div>
<div class="a" style="left:48px;top:101.5px;width:35px;height:15.5px;border:1px solid #b0a9a5;border-bottom:none;border-radius:3px 3px 0 0;background:linear-gradient(#cfcbc8,#c8c3c0)"></div>
<div class="t " style="left:9.80px;top:103.89px;font-size:9.7px;transform:scaleX(1.1147);transform-origin:0 0;">Model</div>
<div class="t " style="left:53.20px;top:104.89px;font-size:9.7px;transform:scaleX(0.9800);transform-origin:0 0;">Tasks</div>
<div class="fr" style="left:7px;top:120px;width:231px;height:212px;border-color:#a39c98;background:#fff;overflow:hidden"><div class="a" style="left:0;top:0;width:231px;height:16px;background:linear-gradient(#d6d3d1,#cdc9c6);border-bottom:1px solid #b9b3af"></div></div>
<div class="t " style="left:9.80px;top:123.64px;font-size:9.7px;transform:scaleX(1.0843);transform-origin:0 0;">Labels &amp; Attributes</div>
<div class="t " style="left:10.20px;top:137.84px;font-size:9.7px;transform:scaleX(1.0600);transform-origin:0 0;text-shadow:none;">Application</div>
<div class="t " style="left:43.40px;top:151.34px;font-size:9.7px;transform:scaleX(0.9996);transform-origin:0 0;font-weight:bold;color:#1c1c22;text-shadow:none;">Jeep</div>
<div class="t " style="left:43.95px;top:164.14px;font-size:9.7px;transform:scaleX(1.0202);transform-origin:0 0;color:#1c1c22;text-shadow:none;">chasis</div>
<div class="t " style="left:59.80px;top:176.94px;font-size:9.7px;transform:scaleX(1.0290);transform-origin:0 0;color:#7e7e7e;text-shadow:none;">Box</div>
<div class="t " style="left:59.80px;top:189.74px;font-size:9.7px;transform:scaleX(1.0774);transform-origin:0 0;color:#7e7e7e;text-shadow:none;">Pocket</div>
<div class="t " style="left:59.80px;top:202.54px;font-size:9.7px;transform:scaleX(1.0493);transform-origin:0 0;color:#7e7e7e;text-shadow:none;">Pocket001</div>
<div class="t " style="left:59.80px;top:215.34px;font-size:9.7px;transform:scaleX(1.0840);transform-origin:0 0;color:#7e7e7e;text-shadow:none;">Fillet</div>
<div class="t " style="left:59.80px;top:228.14px;font-size:9.7px;transform:scaleX(1.0690);transform-origin:0 0;color:#7e7e7e;text-shadow:none;">Pocket002</div>
<div class="t " style="left:59.80px;top:240.94px;font-size:9.7px;transform:scaleX(1.0283);transform-origin:0 0;color:#7e7e7e;text-shadow:none;">Thickness</div>
<div class="t " style="left:59.80px;top:253.74px;font-size:9.7px;transform:scaleX(1.0691);transform-origin:0 0;color:#7e7e7e;text-shadow:none;">Fillet002</div>
<div class="t " style="left:59.80px;top:266.54px;font-size:9.7px;transform:scaleX(1.0691);transform-origin:0 0;color:#7e7e7e;text-shadow:none;">Fillet003</div>
<div class="t " style="left:59.80px;top:279.34px;font-size:9.7px;transform:scaleX(0.9618);transform-origin:0 0;color:#7e7e7e;text-shadow:none;">Pad</div>
<div class="t " style="left:59.80px;top:292.14px;font-size:9.7px;transform:scaleX(1.0691);transform-origin:0 0;color:#7e7e7e;text-shadow:none;">Fillet004</div>
<div class="t " style="left:59.80px;top:304.94px;font-size:9.7px;transform:scaleX(1.0691);transform-origin:0 0;color:#7e7e7e;text-shadow:none;">Fillet005</div>
<div class="t " style="left:59.80px;top:317.74px;font-size:9.7px;transform:scaleX(0.9960);transform-origin:0 0;color:#7e7e7e;text-shadow:none;">Fusion</div>
<svg class="a" style="left:0;top:0" width="256" height="332" viewBox="0 0 256 332"><polyline points="13.8,153.4 16.6,156.0 13.8,158.6" fill="none" stroke="#222" stroke-width="1.2"/><line x1="19" y1="156.0" x2="24" y2="156.0" stroke="#9a9a9a" stroke-width="1" stroke-dasharray="1 1"/><g transform="translate(28.0,149.8)"><path d="M0.5,0.5 H6.5 L9.5,3.5 V12.3 H0.5Z" fill="#fcfcfc" stroke="#3a3a3a" stroke-width=".9"/><path d="M6.5,0.5 V3.5 H9.5" fill="none" stroke="#3a3a3a" stroke-width=".8"/><path d="M2,3 H5 M2,4.8 H6.5" stroke="#999" stroke-width=".7"/><circle cx="3.6" cy="9.2" r="2" fill="#18c4d4"/><rect x="5" y="8.2" width="4" height="2" fill="#c818c8"/></g><polyline points="12.8,167.6 15.4,170.2 18,167.6" fill="none" stroke="#222" stroke-width="1.2"/><line x1="19" y1="168.8" x2="24" y2="168.8" stroke="#9a9a9a" stroke-width="1" stroke-dasharray="1 1"/><g transform="translate(28.0,162.6)"><path d="M0.5,0.5 H6.5 L9.5,3.5 V12.3 H0.5Z" fill="#fcfcfc" stroke="#3a3a3a" stroke-width=".9"/><path d="M6.5,0.5 V3.5 H9.5" fill="none" stroke="#3a3a3a" stroke-width=".8"/><path d="M2,3 H5 M2,4.8 H6.5" stroke="#999" stroke-width=".7"/><circle cx="3.6" cy="9.2" r="2" fill="#18c4d4"/><rect x="5" y="8.2" width="4" height="2" fill="#c818c8"/></g><line x1="32" y1="181.6" x2="40" y2="181.6" stroke="#9a9a9a" stroke-width="1" stroke-dasharray="1 1"/><g transform="translate(42.5,176.4)"><polygon points="1,2.2 8,3.4 8,10.8 1,9.4" fill="#8f8f8f" stroke="#555" stroke-width=".6"/><polygon points="8,3.4 11,1.6 11,8.6 8,10.8" fill="#6e6e6e" stroke="#555" stroke-width=".6"/><polygon points="1,2.2 4.4,0.6 11,1.6 8,3.4" fill="#b5b5b5" stroke="#555" stroke-width=".6"/></g><polyline points="30.2,191.8 33,194.4 30.2,197.0" fill="none" stroke="#222" stroke-width="1.2"/><line x1="35" y1="194.4" x2="40" y2="194.4" stroke="#9a9a9a" stroke-width="1" stroke-dasharray="1 1"/><g transform="translate(42.5,189.2)"><polygon points="0.5,4.6 6,2 12,4 12,7.4 6.4,10.4 0.5,8" fill="#858585" stroke="#555" stroke-width=".6"/><polygon points="0.5,4.6 6,2 12,4 6.4,6.8" fill="#a9a9a9" stroke="#555" stroke-width=".5"/><polygon points="4,4.4 6.2,3.4 8.6,4.2 6.4,5.4" fill="#5d5d5d"/></g><polyline points="30.2,204.6 33,207.2 30.2,209.8" fill="none" stroke="#222" stroke-width="1.2"/><line x1="35" y1="207.2" x2="40" y2="207.2" stroke="#9a9a9a" stroke-width="1" stroke-dasharray="1 1"/><g transform="translate(42.5,202.0)"><polygon points="0.5,4.6 6,2 12,4 12,7.4 6.4,10.4 0.5,8" fill="#858585" stroke="#555" stroke-width=".6"/><polygon points="0.5,4.6 6,2 12,4 6.4,6.8" fill="#a9a9a9" stroke="#555" stroke-width=".5"/><polygon points="4,4.4 6.2,3.4 8.6,4.2 6.4,5.4" fill="#5d5d5d"/></g><line x1="32" y1="220.0" x2="40" y2="220.0" stroke="#9a9a9a" stroke-width="1" stroke-dasharray="1 1"/><g transform="translate(42.5,214.8)"><polygon points="1,2.2 8,3.4 8,10.8 1,9.4" fill="#8f8f8f" stroke="#555" stroke-width=".6"/><polygon points="8,3.4 11,1.6 11,8.6 8,10.8" fill="#6e6e6e" stroke="#555" stroke-width=".6"/><polygon points="1,2.2 4.4,0.6 11,1.6 8,3.4" fill="#b5b5b5" stroke="#555" stroke-width=".6"/></g><polyline points="30.2,230.2 33,232.8 30.2,235.4" fill="none" stroke="#222" stroke-width="1.2"/><line x1="35" y1="232.8" x2="40" y2="232.8" stroke="#9a9a9a" stroke-width="1" stroke-dasharray="1 1"/><g transform="translate(42.5,227.6)"><polygon points="0.5,4.6 6,2 12,4 12,7.4 6.4,10.4 0.5,8" fill="#858585" stroke="#555" stroke-width=".6"/><polygon points="0.5,4.6 6,2 12,4 6.4,6.8" fill="#a9a9a9" stroke="#555" stroke-width=".5"/><polygon points="4,4.4 6.2,3.4 8.6,4.2 6.4,5.4" fill="#5d5d5d"/></g><polyline points="30.2,243.0 33,245.6 30.2,248.2" fill="none" stroke="#222" stroke-width="1.2"/><line x1="35" y1="245.6" x2="40" y2="245.6" stroke="#9a9a9a" stroke-width="1" stroke-dasharray="1 1"/><g transform="translate(42.5,240.4)"><polygon points="0.5,6.6 3,4.6 11.5,5.2 11.5,9.4 9,10.8 0.5,10.4" fill="#9b9b9b" stroke="#666" stroke-width=".6"/><polygon points="0.5,6.6 3,4.6 11.5,5.2 9,7" fill="#c9c9c9" stroke="#777" stroke-width=".5"/></g><line x1="32" y1="258.4" x2="40" y2="258.4" stroke="#9a9a9a" stroke-width="1" stroke-dasharray="1 1"/><g transform="translate(42.5,253.2)"><polygon points="1,2.2 8,3.4 8,10.8 1,9.4" fill="#8f8f8f" stroke="#555" stroke-width=".6"/><polygon points="8,3.4 11,1.6 11,8.6 8,10.8" fill="#6e6e6e" stroke="#555" stroke-width=".6"/><polygon points="1,2.2 4.4,0.6 11,1.6 8,3.4" fill="#b5b5b5" stroke="#555" stroke-width=".6"/></g><line x1="32" y1="271.2" x2="40" y2="271.2" stroke="#9a9a9a" stroke-width="1" stroke-dasharray="1 1"/><g transform="translate(42.5,266.0)"><polygon points="1,2.2 8,3.4 8,10.8 1,9.4" fill="#8f8f8f" stroke="#555" stroke-width=".6"/><polygon points="8,3.4 11,1.6 11,8.6 8,10.8" fill="#6e6e6e" stroke="#555" stroke-width=".6"/><polygon points="1,2.2 4.4,0.6 11,1.6 8,3.4" fill="#b5b5b5" stroke="#555" stroke-width=".6"/></g><polyline points="30.2,281.4 33,284.0 30.2,286.6" fill="none" stroke="#222" stroke-width="1.2"/><line x1="35" y1="284.0" x2="40" y2="284.0" stroke="#9a9a9a" stroke-width="1" stroke-dasharray="1 1"/><g transform="translate(42.5,278.8)"><polygon points="0.5,4 6,1.6 12,3.4 6.4,6.2" fill="#8a8a8a" stroke="#555" stroke-width=".6"/><polygon points="0.5,4 6.4,6.2 6.4,8 0.5,5.8" fill="#6e6e6e"/><polygon points="12,3.4 6.4,6.2 6.4,8 12,5.2" fill="#5c5c5c"/><polygon points="0.5,7.4 6.4,9.8 12,6.8 12,7.8 6.4,11 0.5,8.6" fill="#e9e9e9" stroke="#888" stroke-width=".5"/></g><line x1="32" y1="296.8" x2="40" y2="296.8" stroke="#9a9a9a" stroke-width="1" stroke-dasharray="1 1"/><g transform="translate(42.5,291.6)"><polygon points="1,2.2 8,3.4 8,10.8 1,9.4" fill="#8f8f8f" stroke="#555" stroke-width=".6"/><polygon points="8,3.4 11,1.6 11,8.6 8,10.8" fill="#6e6e6e" stroke="#555" stroke-width=".6"/><polygon points="1,2.2 4.4,0.6 11,1.6 8,3.4" fill="#b5b5b5" stroke="#555" stroke-width=".6"/></g><line x1="32" y1="309.6" x2="40" y2="309.6" stroke="#9a9a9a" stroke-width="1" stroke-dasharray="1 1"/><g transform="translate(42.5,304.4)"><polygon points="1,2.2 8,3.4 8,10.8 1,9.4" fill="#8f8f8f" stroke="#555" stroke-width=".6"/><polygon points="8,3.4 11,1.6 11,8.6 8,10.8" fill="#6e6e6e" stroke="#555" stroke-width=".6"/><polygon points="1,2.2 4.4,0.6 11,1.6 8,3.4" fill="#b5b5b5" stroke="#555" stroke-width=".6"/></g><polyline points="30.2,319.8 33,322.4 30.2,325.0" fill="none" stroke="#222" stroke-width="1.2"/><line x1="35" y1="322.4" x2="40" y2="322.4" stroke="#9a9a9a" stroke-width="1" stroke-dasharray="1 1"/><g transform="translate(42.5,317.2)"><ellipse cx="4.6" cy="7.6" rx="4.3" ry="3.8" fill="#7d7d7d"/><ellipse cx="8" cy="4.6" rx="4" ry="3.6" fill="#8a8a8a"/><ellipse cx="6.4" cy="11" rx="5" ry="1" fill="#bbb"/></g><line x1="15.4" y1="150" x2="15.4" y2="152" stroke="#9a9a9a" stroke-dasharray="1 1"/><line x1="15.4" y1="159" x2="15.4" y2="166" stroke="#9a9a9a" stroke-dasharray="1 1"/><line x1="31.4" y1="175" x2="31.4" y2="331" stroke="#8a8a8a" stroke-width="1"/></svg>
<div class="a" style="left:239.5px;top:132px;width:10px;height:178px;border:1px solid #8f8985;border-radius:4px;background:linear-gradient(90deg,#bfb9b5,#d9d5d2 45%,#c4beba)"></div>
<div class="a" style="left:240.5px;top:133px;width:8px;height:86px;border-radius:3px;background:linear-gradient(90deg,#dcd9d7,#efedec 50%,#d5d2cf);border-bottom:1px solid #8f8985"></div>
<svg class="a" style="left:238px;top:120px" width="14" height="212" viewBox="0 0 14 212"><polyline points="3.6,6.8 6.6,3.8 9.6,6.8" fill="none" stroke="#f4f2f0" stroke-width="1.3"/><polyline points="3.6,197.5 6.6,194.5 9.6,197.5" fill="none" stroke="#efedeb" stroke-width="1.3"/><polyline points="3.4,204.3 6.6,207.5 9.8,204.3" fill="none" stroke="#2a2a2a" stroke-width="1.4"/></svg>
<div class="a" style="left:123px;top:334px;width:8px;height:1px;background:repeating-linear-gradient(90deg,#9a948f 0 1px,transparent 1px 2px)"></div>
<div class="fr" style="left:6.5px;top:338px;width:244px;height:230px;border-color:#aea7a3"></div>
<div class="a" style="left:10px;top:340.5px;width:236.5px;height:224.5px;background:#fff;border-radius:2px"><div class="a" style="left:0;top:0;width:236.5px;height:16.5px;background:linear-gradient(#c9c3c0,#c1bab7);border-bottom:1px solid #ece9e7"></div></div>
<div class="t " style="left:12.40px;top:344.14px;font-size:9.7px;transform:scaleX(1.1156);transform-origin:0 0;">Property</div>
<div class="t " style="left:93.20px;top:344.14px;font-size:9.7px;transform:scaleX(1.0212);transform-origin:0 0;">Value</div>
<div class="a" style="left:88px;top:345px;width:1px;height:8px;background:repeating-linear-gradient(#9a948f 0 1px,transparent 1px 2px)"></div>
<div class="a" style="left:241px;top:345px;width:1px;height:8px;background:repeating-linear-gradient(#9a948f 0 1px,transparent 1px 2px)"></div>
<div class="a" style="left:7px;top:567px;width:33.5px;height:20px;border:1px solid #a8a19d;border-top:none;border-radius:0 0 4px 4px;background:linear-gradient(#cbc5c2,#d2cdca)"></div>
<div class="a" style="left:43px;top:568px;width:33.5px;height:17.2px;border:1px solid #a8a19d;border-top:none;border-radius:0 0 3px 3px;background:linear-gradient(#bdb6b3,#c2bbb8)"></div>
<div class="t " style="left:12.20px;top:572.89px;font-size:9.7px;transform:scaleX(1.0575);transform-origin:0 0;">View</div>
<div class="t " style="left:47.95px;top:572.14px;font-size:9.7px;transform:scaleX(1.1250);transform-origin:0 0;">Data</div>
<div class="a" style="left:257px;top:81px;width:2px;height:491px;background:linear-gradient(90deg,#d9d6d4,#8e8a90)"></div>
<div id="view"><svg class="a" style="left:-259px;top:-81px" width="1024" height="618" viewBox="0 0 1024 618"><defs>
<radialGradient id="rim" cx="0.42" cy="0.42" r="0.62"><stop offset="0" stop-color="#f2f2f2"/><stop offset="0.45" stop-color="#c2c2c2"/><stop offset="1" stop-color="#5f5f5f"/></radialGradient>
<radialGradient id="dish" cx="0.5" cy="0.5" r="0.5"><stop offset="0" stop-color="#8a8a8a"/><stop offset="0.6" stop-color="#e2e2e2"/><stop offset="1" stop-color="#f4f4f4"/></radialGradient>
<linearGradient id="cyl" x1="0" y1="0" x2="0" y2="1"><stop offset="0" stop-color="#c80c0c"/><stop offset="0.45" stop-color="#f21212"/><stop offset="1" stop-color="#cf0d0d"/></linearGradient>
<radialGradient id="arch" cx="0.7" cy="0.3" r="0.7"><stop offset="0" stop-color="#ff1717"/><stop offset="1" stop-color="#c70c0c"/></radialGradient>
<pattern id="dots" width="2.9" height="2.3" patternUnits="userSpaceOnUse" patternTransform="rotate(-37)"><ellipse cx="1.45" cy="1.15" rx="1.1" ry="0.9" fill="#110202"/></pattern>
<linearGradient id="grl" x1="0" y1="0" x2="1" y2="1"><stop offset="0" stop-color="#a00b0b"/><stop offset="0.5" stop-color="#700909"/><stop offset="1" stop-color="#2a0505"/></linearGradient>
<linearGradient id="well" x1="0.2" y1="0" x2="0.6" y2="1"><stop offset="0" stop-color="#1c0303"/><stop offset="0.5" stop-color="#4a0707"/><stop offset="1" stop-color="#a00b0b"/></linearGradient>
<linearGradient id="well2" x1="0" y1="0" x2="0.3" y2="1"><stop offset="0" stop-color="#8a0a0a"/><stop offset="1" stop-color="#d80e0e"/></linearGradient>
<linearGradient id="rimsp" x1="0" y1="0.5" x2="1" y2="0.3"><stop offset="0" stop-color="#f2f2f2"/><stop offset="0.45" stop-color="#d6d6d6"/><stop offset="1" stop-color="#6c6c6c"/></linearGradient>
</defs>
<polygon points="344.6,309.7 617.8,203.4 990.4,357.3 812.5,572.0 622.0,572.0" fill="#959595" stroke="#151515" stroke-width="1.1" stroke-linejoin="round" />
<ellipse cx="496.9" cy="199.5" rx="35.6" ry="28.6" transform="rotate(-35.0 496.9 199.5)" fill="#2c2c2c" stroke="none" stroke-width="0.8" />
<ellipse cx="498.6" cy="200.2" rx="35.6" ry="28.6" transform="rotate(-35.0 498.6 200.2)" fill="#2c2c2c" stroke="none" stroke-width="0.8" />
<ellipse cx="500.4" cy="200.9" rx="35.6" ry="28.6" transform="rotate(-35.0 500.4 200.9)" fill="#2c2c2c" stroke="none" stroke-width="0.8" />
<ellipse cx="502.1" cy="201.5" rx="35.6" ry="28.6" transform="rotate(-35.0 502.1 201.5)" fill="#2c2c2c" stroke="none" stroke-width="0.8" />
<ellipse cx="503.9" cy="202.2" rx="35.6" ry="28.6" transform="rotate(-35.0 503.9 202.2)" fill="#2c2c2c" stroke="none" stroke-width="0.8" />
<ellipse cx="505.6" cy="202.9" rx="35.6" ry="28.6" transform="rotate(-35.0 505.6 202.9)" fill="#2c2c2c" stroke="none" stroke-width="0.8" />
<ellipse cx="507.4" cy="203.6" rx="35.6" ry="28.6" transform="rotate(-35.0 507.4 203.6)" fill="#2c2c2c" stroke="none" stroke-width="0.8" />
<ellipse cx="509.1" cy="204.3" rx="35.6" ry="28.6" transform="rotate(-35.0 509.1 204.3)" fill="#2c2c2c" stroke="none" stroke-width="0.8" />
<ellipse cx="510.9" cy="204.9" rx="35.6" ry="28.6" transform="rotate(-35.0 510.9 204.9)" fill="#2c2c2c" stroke="none" stroke-width="0.8" />
<ellipse cx="512.6" cy="205.6" rx="35.6" ry="28.6" transform="rotate(-35.0 512.6 205.6)" fill="#2c2c2c" stroke="none" stroke-width="0.8" />
<ellipse cx="514.4" cy="206.3" rx="35.6" ry="28.6" transform="rotate(-35.0 514.4 206.3)" fill="#2c2c2c" stroke="none" stroke-width="0.8" />
<ellipse cx="501.4" cy="201.3" rx="34.7" ry="27.7" transform="rotate(-35.0 501.4 201.3)" fill="none" stroke="#0d0d0d" stroke-width="5.820162282960846" stroke-dasharray="1.75 1.40"/>
<ellipse cx="508.1" cy="203.9" rx="34.7" ry="27.7" transform="rotate(-35.0 508.1 203.9)" fill="none" stroke="#0d0d0d" stroke-width="5.820162282960846" stroke-dasharray="1.75 1.40"/>
<ellipse cx="496.9" cy="199.5" rx="35.6" ry="28.6" transform="rotate(-35.0 496.9 199.5)" fill="none" stroke="#101010" stroke-width="0.8" />
<ellipse cx="514.4" cy="206.3" rx="35.0" ry="28.0" transform="rotate(-35.0 514.4 206.3)" fill="#2f2f2f" stroke="#0a0a0a" stroke-width="1.0" />
<ellipse cx="514.4" cy="206.3" rx="31.5" ry="25.2" transform="rotate(-35.0 514.4 206.3)" fill="none" stroke="#222" stroke-width="0.8" />
<ellipse cx="514.4" cy="211.4" rx="26.8" ry="21.4" transform="rotate(-35.0 514.4 211.4)" fill="#1f1f1f" stroke="#0a0a0a" stroke-width="0.7" />
<ellipse cx="514.4" cy="211.4" rx="25.3" ry="20.2" transform="rotate(-35.0 514.4 211.4)" fill="#858585" stroke="#0c0c0c" stroke-width="0.9" />
<ellipse cx="514.4" cy="211.4" rx="22.8" ry="18.2" transform="rotate(-35.0 514.4 211.4)" fill="#9a9a9a" stroke="#2a2a2a" stroke-width="0.7" />
<ellipse cx="512.9" cy="212.4" rx="18.2" ry="14.5" transform="rotate(-35.0 512.9 212.4)" fill="url(#rimsp)" stroke="#1c1c1c" stroke-width="0.9" />
<path d="M506.4,198.4 q4,3 4.5,8.5 q4.5,1 7.5,-0.5 M510.9,206.9 q-5,2.5 -8,8 M505.4,216.4 q3,-3 8,-3.5" fill="none" stroke="#1c1c1c" stroke-width="0.9"/>
<ellipse cx="843.0" cy="363.5" rx="38.0" ry="22.0" transform="rotate(68.0 843.0 363.5)" fill="#2b2b2b" stroke="#0a0a0a" stroke-width="0.8" />
<ellipse cx="848.0" cy="361.5" rx="38.0" ry="22.0" transform="rotate(68.0 848.0 361.5)" fill="#2b2b2b" stroke="none" stroke-width="0.8" />
<ellipse cx="867.0" cy="355.0" rx="38.6" ry="22.6" transform="rotate(68.0 867.0 355.0)" fill="#2c2c2c" stroke="none" stroke-width="0.8" />
<ellipse cx="865.7" cy="355.4" rx="38.6" ry="22.6" transform="rotate(68.0 865.7 355.4)" fill="#2c2c2c" stroke="none" stroke-width="0.8" />
<ellipse cx="864.4" cy="355.8" rx="38.6" ry="22.6" transform="rotate(68.0 864.4 355.8)" fill="#2c2c2c" stroke="none" stroke-width="0.8" />
<ellipse cx="863.1" cy="356.2" rx="38.6" ry="22.6" transform="rotate(68.0 863.1 356.2)" fill="#2c2c2c" stroke="none" stroke-width="0.8" />
<ellipse cx="861.8" cy="356.6" rx="38.6" ry="22.6" transform="rotate(68.0 861.8 356.6)" fill="#2c2c2c" stroke="none" stroke-width="0.8" />
<ellipse cx="860.5" cy="357.0" rx="38.6" ry="22.6" transform="rotate(68.0 860.5 357.0)" fill="#2c2c2c" stroke="none" stroke-width="0.8" />
<ellipse cx="859.2" cy="357.4" rx="38.6" ry="22.6" transform="rotate(68.0 859.2 357.4)" fill="#2c2c2c" stroke="none" stroke-width="0.8" />
<ellipse cx="857.9" cy="357.8" rx="38.6" ry="22.6" transform="rotate(68.0 857.9 357.8)" fill="#2c2c2c" stroke="none" stroke-width="0.8" />
<ellipse cx="856.6" cy="358.2" rx="38.6" ry="22.6" transform="rotate(68.0 856.6 358.2)" fill="#2c2c2c" stroke="none" stroke-width="0.8" />
<ellipse cx="855.3" cy="358.6" rx="38.6" ry="22.6" transform="rotate(68.0 855.3 358.6)" fill="#2c2c2c" stroke="none" stroke-width="0.8" />
<ellipse cx="854.0" cy="359.0" rx="38.6" ry="22.6" transform="rotate(68.0 854.0 359.0)" fill="#2c2c2c" stroke="none" stroke-width="0.8" />
<ellipse cx="863.6" cy="356.0" rx="37.7" ry="21.7" transform="rotate(68.0 863.6 356.0)" fill="none" stroke="#0d0d0d" stroke-width="4.216455857707988" stroke-dasharray="1.90 1.52"/>
<ellipse cx="858.7" cy="357.6" rx="37.7" ry="21.7" transform="rotate(68.0 858.7 357.6)" fill="none" stroke="#0d0d0d" stroke-width="4.216455857707988" stroke-dasharray="1.90 1.52"/>
<ellipse cx="867.0" cy="355.0" rx="38.6" ry="22.6" transform="rotate(68.0 867.0 355.0)" fill="none" stroke="#101010" stroke-width="0.8" />
<ellipse cx="854.0" cy="359.0" rx="38.0" ry="22.0" transform="rotate(68.0 854.0 359.0)" fill="#2f2f2f" stroke="#0a0a0a" stroke-width="1.0" />
<ellipse cx="854.0" cy="359.0" rx="34.2" ry="19.8" transform="rotate(68.0 854.0 359.0)" fill="none" stroke="#222" stroke-width="0.8" />
<ellipse cx="854.0" cy="359.0" rx="27.4" ry="15.8" transform="rotate(68.0 854.0 359.0)" fill="#2a2a2a" stroke="#1c1c1c" stroke-width="0.8" />
<path d="M858.2,358.5 C861.5,362 862.6,368 862.2,373.5 L860.6,373 C860.8,367.5 859.8,362.5 857.2,359.5Z" fill="#e8e8e8" stroke="#777" stroke-width=".5"/>
<polygon points="535.0,260.0 604.0,235.0 612.0,219.0 684.0,208.0 700.0,285.0 652.0,345.0 588.0,333.0 566.0,297.0 553.0,272.0" fill="#b80b0b" stroke="none" stroke-width="1.3" stroke-linejoin="round" />
<polygon points="478.8,229.4 611.3,181.5 612.2,218.6 604.4,235.2 535.0,260.6" fill="#870c0c" stroke="#1a0505" stroke-width="1.3" stroke-linejoin="round" />
<polygon points="611.8,181.9 678.9,208.9 658.2,212.7 647.8,206.9 636.2,205.2 621.9,210.2 612.2,219.2" fill="#a80b0b" stroke="#1a0505" stroke-width="1.3" stroke-linejoin="round" />
<path d="M 607.0,231.5 C 608.3,224.4 615.4,212.7 628.4,207.6 C 637.5,203.9 650.4,205.6 658.8,212.1 L 640.7,222.5 L 637.5,227.0 L 638.7,228.5 L 628.4,236.1 L 612.8,232.2 Z" fill="url(#arch)" stroke="#1a0505" stroke-width="1.1" stroke-linejoin="round"/>
<path d="M 612.8,232.2 C 615.4,228.3 620.6,226.3 628.4,226.5 C 633.6,226.6 636.8,227.4 638.7,228.5" fill="none" stroke="#1a0505" stroke-width="1"/>
<path d="M 622.6,210.2 C 633.6,204.3 647.8,206.9 653.0,211.5" fill="none" stroke="#1a0505" stroke-width="0.9"/>
<polygon points="612.8,232.4 618.0,228.9 628.4,226.7 638.7,228.5 628.4,236.3" fill="#c40c0c" stroke="none" stroke-width="1.3" stroke-linejoin="round" />
<polygon points="535.0,260.6 604.4,235.2 609.6,236.9 561.0,259.9 553.0,272.5" fill="#c40c0c" stroke="#1a0505" stroke-width="1.3" stroke-linejoin="round" />
<polygon points="473.6,229.5 611.3,178.9 611.3,181.5 478.4,229.4" fill="#e30f0f" stroke="#1a0505" stroke-width="1.3" stroke-linejoin="round" />
<polygon points="610.2,178.8 685.4,207.3 678.9,208.9 611.8,181.9" fill="#e30f0f" stroke="#1a0505" stroke-width="1.3" stroke-linejoin="round" />
<polygon points="561.9,263.8 569.4,271.9 577.5,270.6 585.0,295.0 592.5,325.0 583.1,324.8 580.0,321.9 572.5,308.8 566.9,295.0" fill="#a9a9de" stroke="#15152a" stroke-width="1.0" stroke-linejoin="round" />
<polygon points="561.9,263.8 569.4,271.9 576.2,295.0 581.9,323.5 580.0,321.9 572.5,308.8 566.9,295.0" fill="#9292c6" stroke="#15152a" stroke-width="0.8" stroke-linejoin="round" />
<polygon points="578.1,270.2 620.0,250.9 627.5,277.5 631.9,305.0 592.5,325.0" fill="#8585b4" stroke="#15152a" stroke-width="1.3" stroke-linejoin="round" />
<polygon points="561.5,262.5 562.2,258.1 565.0,255.6 569.4,254.0 610.0,236.5 615.0,237.0 619.4,241.2 621.9,248.8 620.0,250.9 578.1,270.2 573.8,271.5 569.4,271.5 565.0,268.8" fill="#b4b4e6" stroke="#15152a" stroke-width="1.3" stroke-linejoin="round" />
<polyline points="569.4,254.0 573.8,256.2 576.9,262.5 578.1,270.2" fill="none" stroke="#15152a" stroke-width="0.8" stroke-linejoin="round" stroke-linecap="round" />
<polygon points="620.0,250.9 621.9,248.8 630.0,278.8 633.8,304.4 631.9,305.0" fill="#7878a8" stroke="#15152a" stroke-width="0.8" stroke-linejoin="round" />
<polygon points="592.5,325.0 632.5,305.0 640.0,312.5 608.1,329.4" fill="#7a7aa6" stroke="#15152a" stroke-width="1.3" stroke-linejoin="round" />
<polygon points="608.1,329.4 640.0,312.5 645.0,331.2 630.0,339.4 613.8,335.0 605.0,331.2" fill="#aeaee0" stroke="#15152a" stroke-width="1.3" stroke-linejoin="round" />
<polygon points="591.2,326.9 608.1,329.4 613.8,335.0" fill="#c9c9f0" stroke="#15152a" stroke-width="0.7" stroke-linejoin="round" />
<polyline points="630.0,339.4 645.0,331.2" fill="none" stroke="#15152a" stroke-width="1.25" stroke-linejoin="round" stroke-linecap="round" />
<polygon points="486.5,293.6 487.4,279.6 492.7,270.8 499.7,266.8 505.0,268.2 502.4,282.2 496.2,289.2" fill="url(#well)" stroke="none" stroke-width="1.3" stroke-linejoin="round" />
<polygon points="503.2,268.6 518.2,272.5 525.2,279.6 511.1,284.8 501.0,282.7" fill="url(#well2)" stroke="none" stroke-width="1.3" stroke-linejoin="round" />
<polyline points="503.4,268.9 501.5,281.8" fill="none" stroke="#1a0505" stroke-width="0.9" stroke-linejoin="round" stroke-linecap="round" />
<ellipse cx="539.3" cy="320.5" rx="43.9" ry="23.1" transform="rotate(66.0 539.3 320.5)" fill="#2c2c2c" stroke="none" stroke-width="0.8" />
<ellipse cx="537.6" cy="321.0" rx="44.1" ry="23.2" transform="rotate(66.0 537.6 321.0)" fill="#2c2c2c" stroke="none" stroke-width="0.8" />
<ellipse cx="535.9" cy="321.5" rx="44.4" ry="23.4" transform="rotate(66.0 535.9 321.5)" fill="#2c2c2c" stroke="none" stroke-width="0.8" />
<ellipse cx="534.2" cy="322.0" rx="44.6" ry="23.5" transform="rotate(66.0 534.2 322.0)" fill="#2c2c2c" stroke="none" stroke-width="0.8" />
<ellipse cx="532.5" cy="322.5" rx="44.8" ry="23.6" transform="rotate(66.0 532.5 322.5)" fill="#2c2c2c" stroke="none" stroke-width="0.8" />
<ellipse cx="530.8" cy="323.0" rx="45.1" ry="23.7" transform="rotate(66.0 530.8 323.0)" fill="#2c2c2c" stroke="none" stroke-width="0.8" />
<ellipse cx="529.1" cy="323.5" rx="45.3" ry="23.8" transform="rotate(66.0 529.1 323.5)" fill="#2c2c2c" stroke="none" stroke-width="0.8" />
<ellipse cx="527.4" cy="324.0" rx="45.5" ry="23.9" transform="rotate(66.0 527.4 324.0)" fill="#2c2c2c" stroke="none" stroke-width="0.8" />
<ellipse cx="525.7" cy="324.5" rx="45.7" ry="24.1" transform="rotate(66.0 525.7 324.5)" fill="#2c2c2c" stroke="none" stroke-width="0.8" />
<ellipse cx="524.0" cy="325.0" rx="46.0" ry="24.2" transform="rotate(66.0 524.0 325.0)" fill="#2c2c2c" stroke="none" stroke-width="0.8" />
<ellipse cx="522.3" cy="325.5" rx="46.2" ry="24.3" transform="rotate(66.0 522.3 325.5)" fill="#2c2c2c" stroke="none" stroke-width="0.8" />
<ellipse cx="534.9" cy="321.8" rx="43.6" ry="22.5" transform="rotate(66.0 534.9 321.8)" fill="none" stroke="#0d0d0d" stroke-width="5.493213995467499" stroke-dasharray="2.28 1.82"/>
<ellipse cx="528.4" cy="323.7" rx="44.5" ry="23.0" transform="rotate(66.0 528.4 323.7)" fill="none" stroke="#0d0d0d" stroke-width="5.493213995467499" stroke-dasharray="2.28 1.82"/>
<ellipse cx="539.3" cy="320.5" rx="43.9" ry="23.1" transform="rotate(66.0 539.3 320.5)" fill="none" stroke="#101010" stroke-width="0.8" />
<ellipse cx="522.3" cy="325.5" rx="45.6" ry="23.7" transform="rotate(66.0 522.3 325.5)" fill="#2f2f2f" stroke="#0a0a0a" stroke-width="1.0" />
<ellipse cx="522.3" cy="325.5" rx="41.0" ry="21.3" transform="rotate(66.0 522.3 325.5)" fill="none" stroke="#222" stroke-width="0.8" />
<ellipse cx="519.8" cy="326.0" rx="33.4" ry="17.3" transform="rotate(66.0 519.8 326.0)" fill="#1f1f1f" stroke="#0a0a0a" stroke-width="0.7" />
<ellipse cx="519.8" cy="326.0" rx="30.6" ry="15.9" transform="rotate(66.0 519.8 326.0)" fill="#a2a2a2" stroke="#0c0c0c" stroke-width="0.9" />
<ellipse cx="519.8" cy="326.0" rx="28.5" ry="14.8" transform="rotate(66.0 519.8 326.0)" fill="#c4c4c4" stroke="#2a2a2a" stroke-width="0.7" />
<ellipse cx="519.8" cy="326.0" rx="26.0" ry="13.5" transform="rotate(66.0 519.8 326.0)" fill="#8a8a8a" stroke="#1a1a1a" stroke-width="0.8" />
<ellipse cx="519.8" cy="326.0" rx="23.9" ry="12.4" transform="rotate(66.0 519.8 326.0)" fill="url(#rim)" stroke="#1c1c1c" stroke-width="0.8" />
<ellipse cx="525.8" cy="344.9" rx="1.1" ry="1.1" transform="rotate(0.0 525.8 344.9)" fill="#3a3a3a" stroke="#111" stroke-width="0.4" />
<ellipse cx="516.2" cy="339.6" rx="1.1" ry="1.1" transform="rotate(0.0 516.2 339.6)" fill="#3a3a3a" stroke="#111" stroke-width="0.4" />
<ellipse cx="508.7" cy="326.3" rx="1.1" ry="1.1" transform="rotate(0.0 508.7 326.3)" fill="#3a3a3a" stroke="#111" stroke-width="0.4" />
<ellipse cx="507.7" cy="312.9" rx="1.1" ry="1.1" transform="rotate(0.0 507.7 312.9)" fill="#3a3a3a" stroke="#111" stroke-width="0.4" />
<ellipse cx="513.8" cy="307.1" rx="1.1" ry="1.1" transform="rotate(0.0 513.8 307.1)" fill="#3a3a3a" stroke="#111" stroke-width="0.4" />
<ellipse cx="523.4" cy="312.4" rx="1.1" ry="1.1" transform="rotate(0.0 523.4 312.4)" fill="#3a3a3a" stroke="#111" stroke-width="0.4" />
<ellipse cx="530.9" cy="325.7" rx="1.1" ry="1.1" transform="rotate(0.0 530.9 325.7)" fill="#3a3a3a" stroke="#111" stroke-width="0.4" />
<ellipse cx="531.9" cy="339.1" rx="1.1" ry="1.1" transform="rotate(0.0 531.9 339.1)" fill="#3a3a3a" stroke="#111" stroke-width="0.4" />
<ellipse cx="522.3" cy="325.2" rx="11.5" ry="6.0" transform="rotate(66.0 522.3 325.2)" fill="url(#dish)" stroke="#4a4a4a" stroke-width="0.6" />
<ellipse cx="522.3" cy="325.2" rx="5.8" ry="3.4" transform="rotate(66.0 522.3 325.2)" fill="#2e2e2e" stroke="#0c0c0c" stroke-width="0.8" />
<ellipse cx="523.0" cy="324.4" rx="3.0" ry="2.0" transform="rotate(66.0 523.0 324.4)" fill="#9a9a9a" stroke="#111" stroke-width="0.5" />
<ellipse cx="523.8" cy="324.2" rx="1.2" ry="1.2" transform="rotate(66.0 523.8 324.2)" fill="#f2f2f2" stroke="none" stroke-width="0.8" />
<polygon points="473.5,229.4 552.5,272.5 560.0,283.0 566.0,298.0 571.0,311.0 579.0,325.0 587.0,333.0 588.5,360.5 565.4,348.4 559.5,330.8 549.8,311.2 542.8,299.8 534.0,288.4 525.2,279.6 516.4,272.5 506.8,268.2 499.7,268.2 493.6,271.7 489.2,279.6 487.4,292.8 483.1,291.3 474.4,232.5" fill="#a90b0b" stroke="#1a0505" stroke-width="1.3" stroke-linejoin="round" />
<polygon points="587.0,333.0 635.0,345.0 641.0,346.5 646.5,343.5 648.0,336.0 650.0,308.0 668.0,335.0 669.4,355.0 666.9,358.8 653.8,376.2 640.0,370.0 632.2,370.6 625.8,374.7 588.5,360.5" fill="#c40c0c" stroke="#1a0505" stroke-width="1.3" stroke-linejoin="round" />
<polygon points="473.6,229.5 478.4,229.0 551.6,270.8 548.8,274.5 474.7,232.8" fill="#c90d0d" stroke="#1a0505" stroke-width="1.3" stroke-linejoin="round" />
<polygon points="551.6,270.8 556.0,274.0 561.0,281.0 566.0,295.0 560.0,295.0 556.5,284.0 553.0,278.0 548.8,274.5" fill="#e30f0f" stroke="#1a0505" stroke-width="1.3" stroke-linejoin="round" />
<polygon points="560.0,295.0 565.0,306.2 571.2,318.8 578.8,327.5 587.5,333.1 635.0,345.0 641.2,346.2 646.2,343.1 647.5,336.2 645.6,336.2 644.4,341.2 640.0,344.0 635.0,343.1 591.2,327.2 582.5,325.0 580.0,321.9 572.5,308.8 566.9,295.0" fill="#d00e0e" stroke="#1a0505" stroke-width="1.3" stroke-linejoin="round" />
<polyline points="586.9,333.1 588.5,360.0" fill="none" stroke="#1a0505" stroke-width="1.25" stroke-linejoin="round" stroke-linecap="round" />
<ellipse cx="483.2" cy="274.6" rx="2.2" ry="3.4" transform="rotate(-15.0 483.2 274.6)" fill="#ff1a1a" stroke="#400" stroke-width="0.6" />
<polygon points="849.3,375.9 855.0,371.3 874.7,382.7 873.1,388.3 867.4,391.7" fill="#0d0d90" stroke="#05052a" stroke-width="1.3" stroke-linejoin="round" />
<polygon points="842.5,382.7 849.3,375.9 867.4,391.7 860.6,397.4" fill="#09096c" stroke="#05052a" stroke-width="1.3" stroke-linejoin="round" />
<polygon points="774.2,440.7 779.4,436.2 808.6,453.0 801.5,458.9" fill="#0d0d90" stroke="#05052a" stroke-width="1.3" stroke-linejoin="round" />
<polygon points="773.0,445.9 774.2,440.7 801.5,458.9 792.4,466.4 775.5,456.5" fill="#09096c" stroke="#05052a" stroke-width="1.3" stroke-linejoin="round" />
<polygon points="894.2,384.9 895.3,381.5 893.7,391.7 804.0,485.1 805.8,474.0" fill="#09096c" stroke="#05052a" stroke-width="1.3" stroke-linejoin="round" />
<polygon points="792.7,468.3 800.6,459.7 807.4,452.9 873.1,388.3 887.8,375.4 893.5,377.2 895.3,381.5 894.2,384.9 805.8,474.0 795.4,471.5 789.3,474.4" fill="#0d0d90" stroke="#05052a" stroke-width="1.3" stroke-linejoin="round" />
<polygon points="789.3,474.4 795.4,471.5 805.8,474.0 804.0,485.1 795.4,487.3 788.1,483.5 787.2,477.8" fill="#1111a6" stroke="#05052a" stroke-width="1.3" stroke-linejoin="round" />
<polyline points="795.4,471.5 794.5,486.9" fill="none" stroke="#05052a" stroke-width="0.8" stroke-linejoin="round" stroke-linecap="round" />
<path d="M 796.2,273.1 L 805.0,267.9 Q 806.5,267.1 808.1,267.9 L 873.8,295.6 Q 883.8,300.6 881.5,307.5 L 880.0,311.2 L 872.5,318.8 L 867.5,308.8 L 780.0,268.8 L 780.0,265.0 Z" fill="#b00b0b" stroke="#1a0505" stroke-width="1.3" stroke-linejoin="round"/>
<polygon points="867.5,308.8 880.0,311.2 872.5,318.8 866.2,317.5" fill="#e30f0f" stroke="#1a0505" stroke-width="1.3" stroke-linejoin="round" />
<polygon points="690.0,290.0 755.0,254.4 765.0,261.2 867.5,308.8 860.0,316.9 796.2,366.2 712.0,333.0 664.0,300.0" fill="#b00b0b" stroke="#1a0505" stroke-width="1.3" stroke-linejoin="round" />
<polygon points="755.0,254.4 760.0,253.1 796.2,272.9 870.0,308.1 867.5,309.2 780.0,269.0" fill="#c80c0c" stroke="#1a0505" stroke-width="0.8" stroke-linejoin="round" />
<polygon points="662.8,306.4 677.5,311.2 799.6,366.9 801.5,365.9 792.7,389.4 784.9,385.5 669.7,340.5 659.9,338.6 656.0,336.6 656.0,309.3" fill="url(#cyl)" stroke="#1a0505" stroke-width="1.3" stroke-linejoin="round" />
<polyline points="677.5,311.2 672.6,319.1 670.1,330.8 669.7,340.5" fill="none" stroke="#1a0505" stroke-width="1.25" stroke-linejoin="round" stroke-linecap="round" />
<polygon points="650.9,302.0 760.8,242.4 756.4,254.0 654.6,310.8" fill="#de0f0f" stroke="#1a0505" stroke-width="1.3" stroke-linejoin="round" />
<polygon points="795.5,366.5 860.5,316.5 866.0,333.0 857.5,362.5 850.0,373.8 783.8,435.0 782.5,392.5" fill="#bd0c0c" stroke="#1a0505" stroke-width="1.3" stroke-linejoin="round" />
<polygon points="801.2,365.2 856.5,325.0 855.2,336.2 850.0,362.5 843.8,377.5 793.8,421.2 796.9,391.2" fill="url(#grl)" stroke="#2a0404" stroke-width="0.8" stroke-linejoin="round" />
<polygon points="801.2,365.2 856.5,325.0 855.2,336.2 850.0,362.5 843.8,377.5 793.8,421.2 796.9,391.2" fill="url(#dots)" stroke="none"/>
<polygon points="669.4,335.0 688.1,341.9 669.4,355.0" fill="#b80b0b" stroke="#1a0505" stroke-width="1.3" stroke-linejoin="round" />
<polygon points="633.8,370.0 653.8,376.2 645.0,392.5 625.0,385.0 625.0,377.5" fill="#c40c0c" stroke="#1a0505" stroke-width="1.3" stroke-linejoin="round" />
<polygon points="625.0,385.0 645.0,392.5 648.8,401.2 625.6,388.1" fill="#b40b0b" stroke="#1a0505" stroke-width="1.3" stroke-linejoin="round" />
<polyline points="671.0,389.5 684.5,396.8" fill="none" stroke="#15159a" stroke-width="2.0" stroke-linejoin="round" stroke-linecap="round" />
<polygon points="671.2,366.5 678.8,372.5 667.5,388.8 656.2,391.2" fill="#2c0505" stroke="none" stroke-width="1.3" stroke-linejoin="round" />
<polygon points="678.8,372.5 732.5,403.8 732.5,410.0 690.0,410.0 667.5,388.8" fill="#c00c0c" stroke="#1a0505" stroke-width="1.3" stroke-linejoin="round" />
<path d="M669.4,355.0 L688.1,341.9 L748.0,370.6 L786,384 L782.5,388.8 Q776.2,395.6 765.0,400.4 Q750.0,406.2 733.8,397.8 L700.0,378.8 L667.5,358.5 L669.4,355.0 Z" fill="#b50b0b" stroke="#1a0505" stroke-width="1.1" stroke-linejoin="round"/>
<polygon points="666.9,358.5 671.2,366.5 650.0,401.5 645.0,392.5 653.8,376.2" fill="#d40e0e" stroke="#1a0505" stroke-width="1.3" stroke-linejoin="round" />
<path d="M667.5,358.5 L733.8,398.1 L733.8,397.8 Q750.0,406.2 765.0,400.4 Q776.2,395.6 782.5,387.8 L781.0,396.0 Q773.8,405.2 753.8,410.2 Q740.0,408.1 731.9,402.8 L732.5,403.8 L671.2,366.5 Z" fill="#d60e0e" stroke="#1a0505" stroke-width="1.1" stroke-linejoin="round"/>
<polygon points="747.5,410.2 753.8,410.2 770.0,405.2 780.0,396.2 782.5,388.8 786.2,411.2 783.8,435.0 770.0,445.0 767.5,428.8" fill="#c20c0c" stroke="#1a0505" stroke-width="1.3" stroke-linejoin="round" />
<polyline points="775.0,398.1 770.0,443.8" fill="none" stroke="#1a0505" stroke-width="1.25" stroke-linejoin="round" stroke-linecap="round" />
<polyline points="781.2,395.0 776.2,435.0" fill="none" stroke="#1a0505" stroke-width="1.25" stroke-linejoin="round" stroke-linecap="round" />
<polyline points="786.2,411.2 783.1,435.0" fill="none" stroke="#1a0505" stroke-width="1.25" stroke-linejoin="round" stroke-linecap="round" />
<ellipse cx="732.0" cy="447.0" rx="62.4" ry="37.6" transform="rotate(60.0 732.0 447.0)" fill="#2c2c2c" stroke="none" stroke-width="0.8" />
<ellipse cx="729.9" cy="447.5" rx="62.7" ry="37.8" transform="rotate(60.0 729.9 447.5)" fill="#2c2c2c" stroke="none" stroke-width="0.8" />
<ellipse cx="727.8" cy="448.0" rx="63.0" ry="38.0" transform="rotate(60.0 727.8 448.0)" fill="#2c2c2c" stroke="none" stroke-width="0.8" />
<ellipse cx="725.7" cy="448.5" rx="63.3" ry="38.2" transform="rotate(60.0 725.7 448.5)" fill="#2c2c2c" stroke="none" stroke-width="0.8" />
<ellipse cx="723.6" cy="449.0" rx="63.6" ry="38.4" transform="rotate(60.0 723.6 449.0)" fill="#2c2c2c" stroke="none" stroke-width="0.8" />
<ellipse cx="721.5" cy="449.5" rx="64.0" ry="38.6" transform="rotate(60.0 721.5 449.5)" fill="#2c2c2c" stroke="none" stroke-width="0.8" />
<ellipse cx="719.4" cy="450.0" rx="64.3" ry="38.8" transform="rotate(60.0 719.4 450.0)" fill="#2c2c2c" stroke="none" stroke-width="0.8" />
<ellipse cx="717.3" cy="450.5" rx="64.6" ry="39.0" transform="rotate(60.0 717.3 450.5)" fill="#2c2c2c" stroke="none" stroke-width="0.8" />
<ellipse cx="715.2" cy="451.0" rx="64.9" ry="39.2" transform="rotate(60.0 715.2 451.0)" fill="#2c2c2c" stroke="none" stroke-width="0.8" />
<ellipse cx="713.1" cy="451.5" rx="65.3" ry="39.4" transform="rotate(60.0 713.1 451.5)" fill="#2c2c2c" stroke="none" stroke-width="0.8" />
<ellipse cx="711.0" cy="452.0" rx="65.6" ry="39.6" transform="rotate(60.0 711.0 452.0)" fill="#2c2c2c" stroke="none" stroke-width="0.8" />
<ellipse cx="726.5" cy="448.3" rx="62.3" ry="37.3" transform="rotate(60.0 726.5 448.3)" fill="none" stroke="#0d0d0d" stroke-width="6.6919802749261" stroke-dasharray="3.25 2.60"/>
<ellipse cx="718.6" cy="450.2" rx="63.5" ry="38.0" transform="rotate(60.0 718.6 450.2)" fill="none" stroke="#0d0d0d" stroke-width="6.6919802749261" stroke-dasharray="3.25 2.60"/>
<ellipse cx="732.0" cy="447.0" rx="62.4" ry="37.6" transform="rotate(60.0 732.0 447.0)" fill="none" stroke="#101010" stroke-width="0.8" />
<ellipse cx="711.0" cy="452.0" rx="65.0" ry="39.0" transform="rotate(60.0 711.0 452.0)" fill="#2f2f2f" stroke="#0a0a0a" stroke-width="1.0" />
<ellipse cx="711.0" cy="452.0" rx="58.5" ry="35.1" transform="rotate(60.0 711.0 452.0)" fill="none" stroke="#222" stroke-width="0.8" />
<ellipse cx="710.0" cy="457.0" rx="49.1" ry="25.6" transform="rotate(51.0 710.0 457.0)" fill="#1f1f1f" stroke="#0a0a0a" stroke-width="0.7" />
<ellipse cx="710.0" cy="457.0" rx="45.0" ry="23.5" transform="rotate(51.0 710.0 457.0)" fill="#a2a2a2" stroke="#0c0c0c" stroke-width="0.9" />
<ellipse cx="710.0" cy="457.0" rx="41.9" ry="21.9" transform="rotate(51.0 710.0 457.0)" fill="#c4c4c4" stroke="#2a2a2a" stroke-width="0.7" />
<ellipse cx="710.0" cy="457.0" rx="38.2" ry="20.0" transform="rotate(51.0 710.0 457.0)" fill="#8a8a8a" stroke="#1a1a1a" stroke-width="0.8" />
<ellipse cx="710.0" cy="457.0" rx="35.1" ry="18.3" transform="rotate(51.0 710.0 457.0)" fill="url(#rim)" stroke="#1c1c1c" stroke-width="0.8" />
<ellipse cx="725.8" cy="481.6" rx="1.6" ry="1.6" transform="rotate(0.0 725.8 481.6)" fill="#3a3a3a" stroke="#111" stroke-width="0.4" />
<ellipse cx="710.1" cy="477.8" rx="1.6" ry="1.6" transform="rotate(0.0 710.1 477.8)" fill="#3a3a3a" stroke="#111" stroke-width="0.4" />
<ellipse cx="694.3" cy="461.7" rx="1.6" ry="1.6" transform="rotate(0.0 694.3 461.7)" fill="#3a3a3a" stroke="#111" stroke-width="0.4" />
<ellipse cx="687.8" cy="443.0" rx="1.6" ry="1.6" transform="rotate(0.0 687.8 443.0)" fill="#3a3a3a" stroke="#111" stroke-width="0.4" />
<ellipse cx="694.2" cy="432.4" rx="1.6" ry="1.6" transform="rotate(0.0 694.2 432.4)" fill="#3a3a3a" stroke="#111" stroke-width="0.4" />
<ellipse cx="709.9" cy="436.2" rx="1.6" ry="1.6" transform="rotate(0.0 709.9 436.2)" fill="#3a3a3a" stroke="#111" stroke-width="0.4" />
<ellipse cx="725.7" cy="452.3" rx="1.6" ry="1.6" transform="rotate(0.0 725.7 452.3)" fill="#3a3a3a" stroke="#111" stroke-width="0.4" />
<ellipse cx="732.2" cy="471.0" rx="1.6" ry="1.6" transform="rotate(0.0 732.2 471.0)" fill="#3a3a3a" stroke="#111" stroke-width="0.4" />
<ellipse cx="712.0" cy="455.0" rx="16.1" ry="8.4" transform="rotate(51.0 712.0 455.0)" fill="url(#dish)" stroke="#4a4a4a" stroke-width="0.6" />
<ellipse cx="712.0" cy="455.0" rx="8.0" ry="4.8" transform="rotate(51.0 712.0 455.0)" fill="#2e2e2e" stroke="#0c0c0c" stroke-width="0.8" />
<ellipse cx="713.0" cy="453.9" rx="4.2" ry="2.9" transform="rotate(51.0 713.0 453.9)" fill="#9a9a9a" stroke="#111" stroke-width="0.5" />
<ellipse cx="714.1" cy="453.6" rx="1.8" ry="1.8" transform="rotate(51.0 714.1 453.6)" fill="#f2f2f2" stroke="none" stroke-width="0.8" />
<ellipse cx="793.3" cy="379.5" rx="6.6" ry="12.6" transform="rotate(24.0 793.3 379.5)" fill="#8c8c8c" stroke="#3a2a2a" stroke-width="0.9" />
<ellipse cx="793.3" cy="379.5" rx="5.0" ry="10.6" transform="rotate(24.0 793.3 379.5)" fill="#b4abab" stroke="none" stroke-width="0.8" />
<ellipse cx="793.7" cy="379.0" rx="2.4" ry="7.5" transform="rotate(24.0 793.7 379.0)" fill="#c9b0b2" stroke="none" stroke-width="0.8" />
<ellipse cx="793.9" cy="378.9" rx="0.9" ry="5.0" transform="rotate(24.0 793.9 378.9)" fill="#c9707c" stroke="none" stroke-width="0.8" />
<ellipse cx="864.2" cy="321.5" rx="5.8" ry="11.1" transform="rotate(24.0 864.2 321.5)" fill="#8c8c8c" stroke="#3a2a2a" stroke-width="0.9" />
<ellipse cx="864.2" cy="321.5" rx="4.4" ry="9.3" transform="rotate(24.0 864.2 321.5)" fill="#b4abab" stroke="none" stroke-width="0.8" />
<ellipse cx="864.6" cy="321.0" rx="2.1" ry="6.6" transform="rotate(24.0 864.6 321.0)" fill="#c9b0b2" stroke="none" stroke-width="0.8" />
<ellipse cx="864.8" cy="320.9" rx="0.8" ry="4.4" transform="rotate(24.0 864.8 320.9)" fill="#c9707c" stroke="none" stroke-width="0.8" />
<polygon points="638.5,225.6 641.9,221.5 678.8,206.0 685.2,207.5 647.8,226.0 641.0,230.0" fill="#c4c4ee" stroke="#15152a" stroke-width="1.3" stroke-linejoin="round" />
<polygon points="645.4,234.5 688.4,215.9 697.1,261.8 662.0,283.3 654.2,271.6" fill="#8585b4" stroke="#2a2a45" stroke-width="0.9" stroke-linejoin="round" />
<polygon points="638.6,237.4 645.4,234.5 654.2,271.6 662.0,283.3 659.1,289.5 649.3,287.2" fill="#a9a9de" stroke="#2a2a45" stroke-width="0.9" stroke-linejoin="round" />
<polyline points="645.4,234.5 651.2,237.4 662.0,283.3" fill="none" stroke="#2a2a45" stroke-width="0.8" stroke-linejoin="round" stroke-linecap="round" />
<polygon points="662.0,283.3 697.1,261.8 705.9,267.7 668.8,289.5 659.1,289.5" fill="#a3a3d6" stroke="#2a2a45" stroke-width="0.9" stroke-linejoin="round" />
<polygon points="707.9,239.3 737.2,252.0 721.6,260.2 708.9,255.9" fill="#9a9ab6" stroke="none" stroke-width="1.3" stroke-linejoin="round" />
<polygon points="689.3,212.6 698.1,210.0 708.9,266.7 699.1,265.7" fill="#8e1626" stroke="#4a0d18" stroke-width="0.8" stroke-linejoin="round" />
<polygon points="632.0,239.0 751.0,185.0 762.5,241.5 652.0,301.5" fill="rgba(140,140,190,0.5)" stroke="none" stroke-width="1.3" stroke-linejoin="round" />
<ellipse cx="723.6" cy="243.2" rx="12.8" ry="5.2" transform="rotate(-33.0 723.6 243.2)" fill="none" stroke="#414160" stroke-width="2.8" />
<polyline points="721.6,245.2 711.8,255.9 703.0,264.7" fill="none" stroke="#414160" stroke-width="3.0" stroke-linejoin="round" stroke-linecap="round" />
<polyline points="711.8,255.9 725.5,251.1" fill="none" stroke="#414160" stroke-width="2.4" stroke-linejoin="round" stroke-linecap="round" />
<polyline points="713.8,255.9 717.7,247.1" fill="none" stroke="#414160" stroke-width="2.0" stroke-linejoin="round" stroke-linecap="round" />
<circle cx="716.5" cy="251.5" r="1.8" fill="#c8463a"/>
<polygon points="623.1,237.5 634.4,237.5 650.6,303.8 640.6,306.2" fill="#d40e0e" stroke="#1a0505" stroke-width="1.3" stroke-linejoin="round" />
<polyline points="627.5,238.8 644.4,305.0" fill="none" stroke="#1a0505" stroke-width="1.25" stroke-linejoin="round" stroke-linecap="round" />
<polyline points="630.6,238.8 646.9,304.4" fill="none" stroke="#1a0505" stroke-width="1.25" stroke-linejoin="round" stroke-linecap="round" />
<polygon points="625.0,237.5 752.5,181.0 753.5,184.5 627.0,241.5" fill="#e01010" stroke="#111" stroke-width="0.6" stroke-linejoin="round" />
<polyline points="624.5,237.2 752.5,180.7" fill="none" stroke="#111" stroke-width="1.8" stroke-linejoin="round" stroke-linecap="round" />
<polygon points="752.5,181.0 755.5,182.0 768.0,242.0 764.0,243.5" fill="#e01010" stroke="#111" stroke-width="0.7" stroke-linejoin="round" />
<polygon points="750.0,186.0 753.0,185.0 765.0,241.0 761.5,242.5" fill="#5a5a80" stroke="none" stroke-width="1.3" stroke-linejoin="round" />
<polyline points="698.4,209.0 710.0,267.5" fill="none" stroke="#c01420" stroke-width="1.2" stroke-linejoin="round" stroke-linecap="round" />
<polygon points="762.5,240.0 767.5,240.0 771.2,258.8 782.5,263.8 783.1,266.2 765.0,261.2 760.0,243.8" fill="#d40e0e" stroke="#1a0505" stroke-width="1.3" stroke-linejoin="round" />
<polygon points="653.2,310.7 663.7,306.2 676.6,311.8 672.1,320.7 671.5,330.8 666.9,330.5 654.8,328.5" fill="#f01111" stroke="none" stroke-width="1.3" stroke-linejoin="round" />
<polygon points="641.0,306.2 649.1,305.4 651.6,326.4 654.8,329.6 663.7,336.9 667.7,330.5 672.1,332.4 668.5,338.5 662.4,342.1 651.6,333.7 645.9,328.0" fill="#d40e0e" stroke="#1a0505" stroke-width="1.3" stroke-linejoin="round" />
<polyline points="644.3,306.2 647.8,327.5 661.3,338.5" fill="none" stroke="#1a0505" stroke-width="0.8" stroke-linejoin="round" stroke-linecap="round" />
<polyline points="641.8,308.1 649.4,307.5" fill="none" stroke="#1a0505" stroke-width="0.8" stroke-linejoin="round" stroke-linecap="round" />
<g stroke-linecap="round"><path d="M999.2,546.6 V531.6" stroke="#1a2a9a" stroke-width="1.6"/><path d="M997.4,537.5 L999.2,532 L1001,537.5Z" fill="#1a2a9a" stroke="#1a2a9a" stroke-width=".6"/><path d="M999.2,546.6 L1008.8,541.4" stroke="#2e8a2e" stroke-width="1.6"/><path d="M1004.5,542.2 L1009.4,541 L1006,544.8Z" fill="#2e8a2e"/><path d="M999.2,546.6 L1012.6,554.4" stroke="#9a2a2a" stroke-width="1.6"/><path d="M1008,553.6 L1013.2,554.8 L1009.6,550.8Z" fill="#9a2a2a"/></g>
<g font-family="Liberation Sans,sans-serif" font-size="6.4" fill="#1c1c24"><text x="1001.6" y="530.6">Z</text><text x="1012" y="541.6">Y</text><text x="1016" y="555.6">X</text></g></svg></div>
<div class="a" style="left:259px;top:571.3px;width:765px;height:3.4px;background:#d6d2cf"></div><div class="a" style="left:340.5px;top:574.5px;width:684px;height:1px;background:#9a9592"></div>
<div class="a" style="left:261.5px;top:573.5px;width:78px;height:19.5px;border:1px solid #a39c98;border-top:none;border-radius:0 0 4px 4px;background:linear-gradient(#d6d2cf,#dbd8d5 30%,#d3cfcc)"></div>
<div class="a" style="left:342px;top:575px;width:84.5px;height:16.8px;border:1px solid #aaa39f;border-top:none;border-radius:0 0 4px 4px;background:linear-gradient(#c2bbb8,#c8c2bf)"></div>
<svg class="a" style="left:259px;top:572px" width="180" height="24" viewBox="0 0 180 24"><g transform="translate(7.0,5.5)"><path d="M0.5,0.5 H7.5 V3.4 H3.8 V5 H6.6 V7.6 H3.8 V11.5 H0.5Z" fill="#e4261c" stroke="#8c120c" stroke-width=".5"/><circle cx="8" cy="8.3" r="3" fill="#2a4fb4" stroke="#14286c" stroke-width="1.8" stroke-dasharray="1.3 1.1"/><circle cx="8" cy="8.3" r="1.2" fill="#dfe7ff"/></g><circle cx="70.5" cy="11.2" r="5.6" fill="#d62a1e" stroke="#9a1810" stroke-width=".8"/><path d="M68.3,9.0 l4.4,4.4 m0,-4.4 l-4.4,4.4" stroke="#fff" stroke-width="1.7" stroke-linecap="round"/><g transform="translate(87.5,5.2)"><path d="M0.5,0.5 H7.5 V3.4 H3.8 V5 H6.6 V7.6 H3.8 V11.5 H0.5Z" fill="#e4261c" stroke="#8c120c" stroke-width=".5"/><circle cx="8" cy="8.3" r="3" fill="#2a4fb4" stroke="#14286c" stroke-width="1.8" stroke-dasharray="1.3 1.1"/><circle cx="8" cy="8.3" r="1.2" fill="#dfe7ff"/></g><circle cx="158.2" cy="10.6" r="5.6" fill="#a9a5a3" stroke="#8f8b89" stroke-width=".8"/><path d="M156.0,8.4 l4.4,4.4 m0,-4.4 l-4.4,4.4" stroke="#fff" stroke-width="1.7" stroke-linecap="round"/></svg>
<div class="t " style="left:282.20px;top:579.14px;font-size:9.7px;transform:scaleX(0.9793);transform-origin:0 0;">Jeep : 1</div>
<div class="t " style="left:363.20px;top:578.39px;font-size:9.7px;transform:scaleX(0.9774);transform-origin:0 0;">chasis : 1</div>
</body></html>
